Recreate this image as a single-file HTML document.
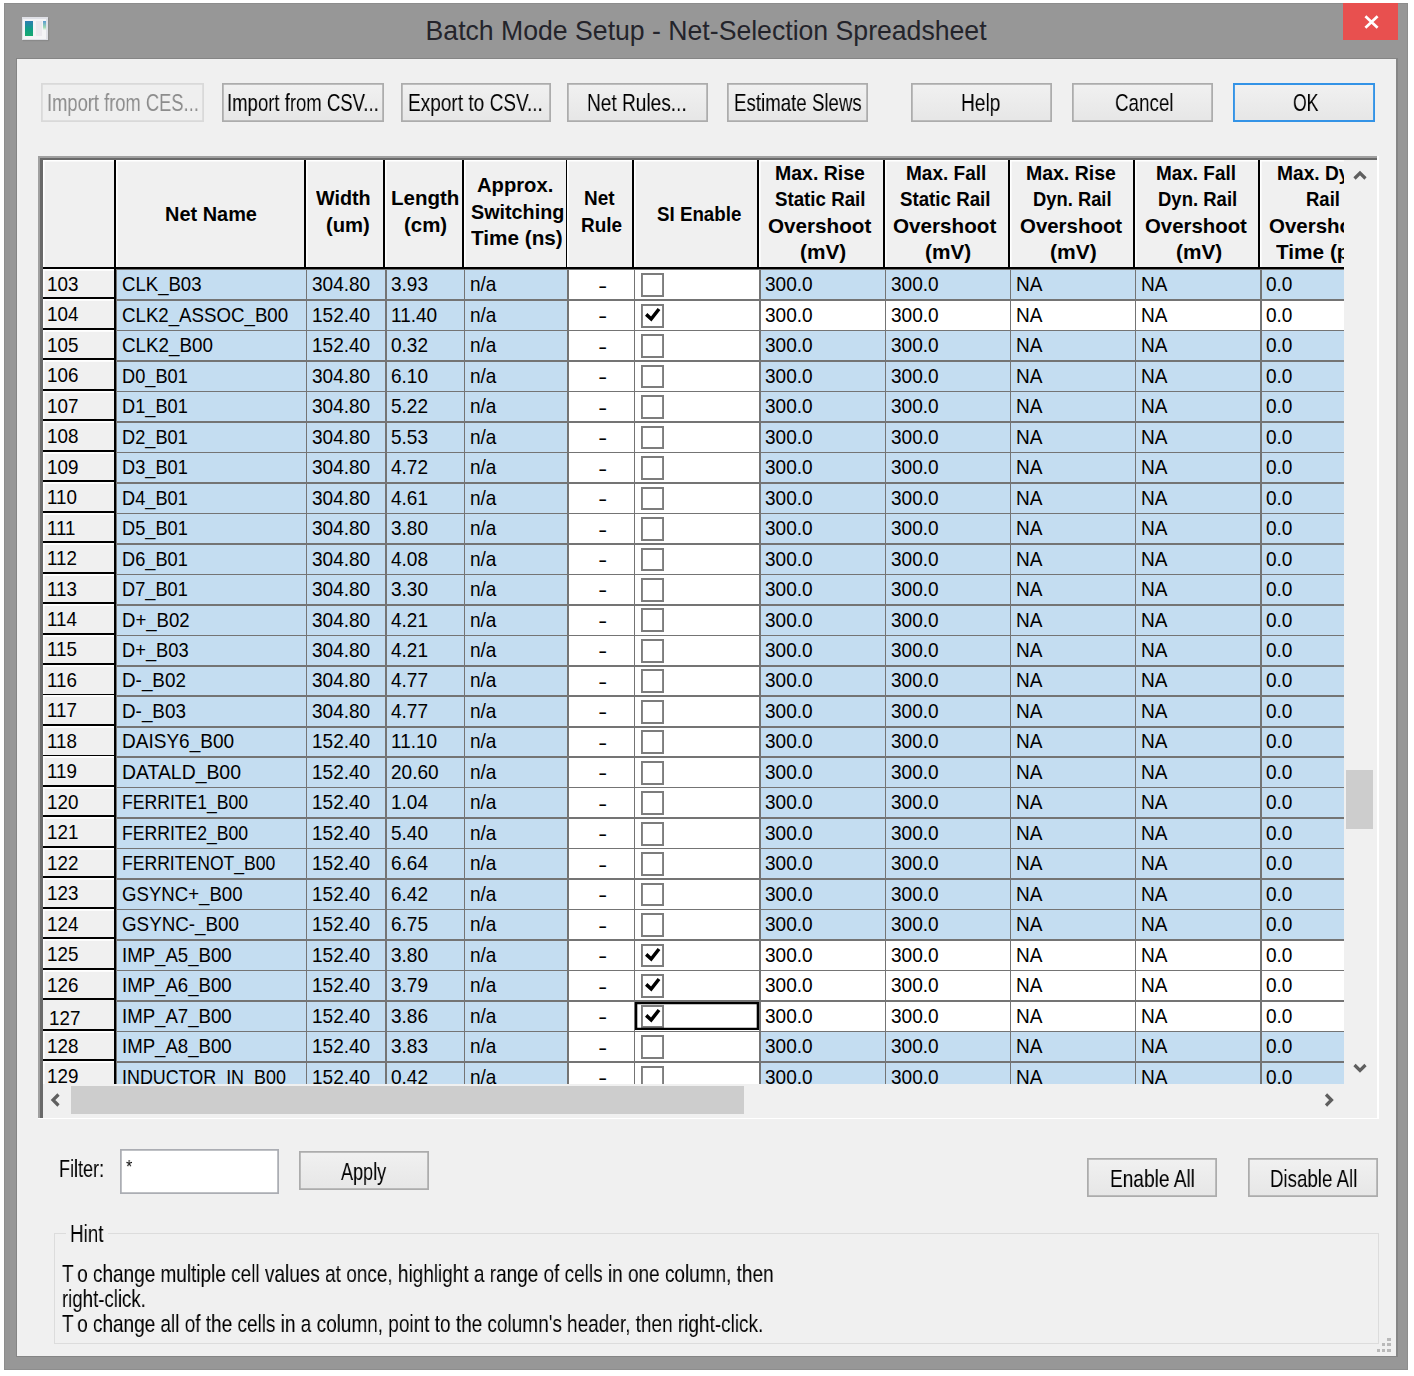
<!DOCTYPE html>
<html><head><meta charset="utf-8"><title>Batch Mode Setup - Net-Selection Spreadsheet</title>
<style>
html,body{margin:0;padding:0;background:#fff;}
body{width:1414px;height:1376px;position:relative;overflow:hidden;font-family:"Liberation Sans",sans-serif;color:#000;}
.a{position:absolute;}
.win{left:4px;top:3px;width:1403.8px;height:1367.3px;background:#979797;box-shadow:inset 0 0 0 1px #8d8d8d;}
.client{left:16px;top:58px;width:1381.5px;height:1299px;background:#858585;}
.client>i{position:absolute;left:1.2px;top:1.2px;right:1.2px;bottom:1.2px;background:#f0f0f0;}
.title{left:-1px;top:10.2px;width:1414px;text-align:center;font-size:28.3px;line-height:40px;color:#24242b;white-space:nowrap;}
.title span{display:inline-block;transform-origin:50% 50%;transform:scaleX(.941);}
.close{left:1342.5px;top:3px;width:55.5px;height:37px;background:#e8504f;}
.btn{box-sizing:border-box;box-shadow:inset 0 0 0 1.75px #acacac;background:linear-gradient(#f1f1f1,#e6e6e6);text-align:center;white-space:nowrap;}
.btn.dis{box-shadow:inset 0 0 0 1.75px #d9d9d9;background:#efefef;color:#8c8c8c;}
.btn.def{box-shadow:inset 0 0 0 1.9px #3393e6;}
.ms{position:absolute;will-change:transform;white-space:nowrap;font-size:24.4px;line-height:28px;transform-origin:0 0;}
.T{font-style:normal;margin-right:4.5px;}
.grid{background:#f0f0f0;overflow:hidden;}
.hc{position:absolute;background:#f0f0f0;font-weight:bold;text-align:center;display:flex;align-items:center;justify-content:center;white-space:nowrap;overflow:visible;}
.hc span{display:block;}
.hl{position:absolute;white-space:nowrap;font-weight:bold;font-size:20.2px;line-height:26.6px;transform-origin:0 0;}
.bl{position:absolute;background:#000;}
.gl{position:absolute;background:#747474;}
.wl{position:absolute;background:#fff;}
.c{position:absolute;white-space:nowrap;overflow:hidden;}
.cb{position:absolute;box-sizing:border-box;box-shadow:inset 0 0 0 1.9px #7c7c7c;background:#fff;}
</style></head><body>

<div class="a win"></div>
<div class="a client"><i></i></div>
<div class="a" style="left:22.0px;top:17.1px;width:25.9px;height:23.3px;background:#dfe0e6;box-shadow:1px 1px 1px #8a8a8a;"></div>
<div class="a" style="left:23.4px;top:19.4px;width:22.9px;height:19.2px;background:#f4f4f6;"></div>
<div class="a" style="left:24.8px;top:21.4px;width:8.6px;height:15px;background:linear-gradient(#2d7db2,#0f9f86 55%,#18a96e);"></div>
<div class="a" style="left:35.5px;top:21.4px;width:6px;height:15px;background:#ebe9ee;"></div>
<div class="a" style="left:42.6px;top:21.4px;width:3.3px;height:9px;background:linear-gradient(#5a9bd0,#9fd8b4 70%,#eef6ee);"></div>
<div class="a title"><span id="ttl">Batch Mode Setup - Net-Selection Spreadsheet</span></div>
<div class="a close"><svg class="a" style="left:21px;top:11.9px" width="15" height="14" viewBox="0 0 15 14"><path d="M1.4 1.2 L13.6 12.8 M13.6 1.2 L1.4 12.8" stroke="#fff" stroke-width="2.7" fill="none"/></svg></div>
<div class="a btn dis" style="left:41.4px;top:82.6px;width:162.4px;height:39.2px;"></div>
<div class="a btn " style="left:222.0px;top:82.6px;width:162.4px;height:39.2px;"></div>
<div class="a btn " style="left:400.8px;top:82.6px;width:150.0px;height:39.2px;"></div>
<div class="a btn " style="left:567.3px;top:82.6px;width:141.0px;height:39.2px;"></div>
<div class="a btn " style="left:726.7px;top:82.6px;width:141.2px;height:39.2px;"></div>
<div class="a btn " style="left:911.0px;top:82.6px;width:141.0px;height:39.2px;"></div>
<div class="a btn " style="left:1072.3px;top:82.6px;width:141.0px;height:39.2px;"></div>
<div class="a btn def" style="left:1233.2px;top:82.6px;width:141.6px;height:39.2px;"></div>
<div class="a" style="left:119.8px;top:1149px;width:158.8px;height:44.6px;box-sizing:border-box;box-shadow:inset 0 0 0 1.75px #abadb3;background:#fff;"></div>
<div class="a btn " style="left:298.7px;top:1151.0px;width:130.5px;height:38.6px;"></div>
<div class="a btn " style="left:1086.6px;top:1158.4px;width:130.3px;height:39.0px;"></div>
<div class="a btn " style="left:1248.0px;top:1158.4px;width:130.2px;height:39.0px;"></div>
<div class="a" style="left:53.6px;top:1233px;width:1325.6px;height:110.6px;box-sizing:border-box;border:1.5px solid #dcdcdc;"></div>
<div class="a" style="left:66px;top:1228px;width:42px;height:12px;background:#f0f0f0;"></div>
<div class="a" style="left:1387.3px;top:1337.5px;width:3.4px;height:3.4px;background:#b9b9b9;"></div>
<div class="a" style="left:1382.1px;top:1343.0px;width:3.4px;height:3.4px;background:#b9b9b9;"></div>
<div class="a" style="left:1387.3px;top:1343.0px;width:3.4px;height:3.4px;background:#b9b9b9;"></div>
<div class="a" style="left:1376.7px;top:1348.5px;width:3.4px;height:3.4px;background:#b9b9b9;"></div>
<div class="a" style="left:1382.1px;top:1348.5px;width:3.4px;height:3.4px;background:#b9b9b9;"></div>
<div class="a" style="left:1387.3px;top:1348.5px;width:3.4px;height:3.4px;background:#b9b9b9;"></div>
<span class="ms" id="tb0" style="left:46.50px;top:89.10px;color:#8c8c8c;transform:scaleX(0.7520);">Import from CES...</span>
<span class="ms" id="tb1" style="left:227.30px;top:89.10px;color:#000;transform:scaleX(0.7600);">Import from CSV...</span>
<span class="ms" id="tb2" style="left:407.50px;top:89.10px;color:#000;transform:scaleX(0.7812);">Export to CSV...</span>
<span class="ms" id="tb3" style="left:587.40px;top:89.10px;color:#000;transform:scaleX(0.7824);">Net Rules...</span>
<span class="ms" id="tb4" style="left:733.80px;top:89.10px;color:#000;transform:scaleX(0.7660);">Estimate Slews</span>
<span class="ms" id="tb5" style="left:961.40px;top:89.10px;color:#000;transform:scaleX(0.7849);">Help</span>
<span class="ms" id="tb6" style="left:1115.20px;top:89.10px;color:#000;transform:scaleX(0.7708);">Cancel</span>
<span class="ms" id="tb7" style="left:1292.70px;top:89.10px;color:#000;transform:scaleX(0.7208);">OK</span>
<span class="ms" id="filter" style="left:58.80px;top:1155.10px;color:#000;transform:scaleX(0.7394);">Filter:</span>
<span class="ms" id="star" style="left:126.10px;top:1153.10px;color:#000;font-size:19px;transform:scaleX(0.8500);">*</span>
<span class="ms" id="apply" style="left:340.70px;top:1158.10px;color:#000;transform:scaleX(0.7407);">Apply</span>
<span class="ms" id="enall" style="left:1110.30px;top:1164.70px;color:#000;transform:scaleX(0.7826);">Enable All</span>
<span class="ms" id="disall" style="left:1270.20px;top:1164.70px;color:#000;transform:scaleX(0.7672);">Disable All</span>
<span class="ms" id="hint" style="left:69.60px;top:1220.10px;color:#000;transform:scaleX(0.7746);">Hint</span>
<span class="ms" id="h1" style="left:61.80px;top:1259.90px;color:#000;transform:scaleX(0.7783);"><i class=T>T</i>o change multiple cell values at once, highlight a range of cells in one column, then</span>
<span class="ms" id="h2" style="left:61.60px;top:1284.70px;color:#000;transform:scaleX(0.7638);">right-click.</span>
<span class="ms" id="h3" style="left:61.80px;top:1309.50px;color:#000;transform:scaleX(0.7781);"><i class=T>T</i>o change all of the cells in a column, point to the column's header, then right-click.</span>
<div class="a" style="left:37.8px;top:155.6px;width:1340.8px;height:963.8px;background:#fff;"></div>
<div class="a" style="left:37.8px;top:155.6px;width:1339.1px;height:962.1px;background:#a0a0a0;"></div>
<div class="a" style="left:40.2px;top:157.9px;width:1336.7px;height:959.8px;background:#696969;"></div>
<div class="a" style="left:42.6px;top:160.1px;width:1334.3px;height:957.6px;background:#f0f0f0;"></div>
<div class="a" style="left:1346.2px;top:769.8px;width:26.9px;height:59px;background:#cdcdcd;"></div>
<div class="a" style="left:71px;top:1086.2px;width:673.2px;height:28.2px;background:#cdcdcd;"></div>
<svg class="a" style="left:1352.7px;top:169.2px" width="14" height="14" viewBox="0 0 14 14"><path d="M1.5 9.5 L7 4 L12.5 9.5" stroke="#5f5f5f" stroke-width="3.2" fill="none"/></svg>
<svg class="a" style="left:1352.7px;top:1061.2px" width="14" height="14" viewBox="0 0 14 14"><path d="M1.5 4 L7 9.5 L12.5 4" stroke="#5f5f5f" stroke-width="3.2" fill="none"/></svg>
<svg class="a" style="left:48.8px;top:1093.2px" width="14" height="14" viewBox="0 0 14 14"><path d="M9.5 1.5 L4 7 L9.5 12.5" stroke="#5f5f5f" stroke-width="3.2" fill="none"/></svg>
<svg class="a" style="left:1322.2px;top:1093.2px" width="14" height="14" viewBox="0 0 14 14"><path d="M4 1.5 L9.5 7 L4 12.5" stroke="#5f5f5f" stroke-width="3.2" fill="none"/></svg>
<div class="a grid" style="left:42.7px;top:160.1px;width:1301.3px;height:923.9px;">
<div class="hc" style="left:0.0px;top:0;width:71.5px;height:106.9px;font-size:20.2px;line-height:26.6px;box-shadow:inset 1.6px 1.6px 0 #fff;"></div>
<div class="bl" style="left:71.5px;top:0;width:1.7px;height:108.6px;"></div>
<div class="hc" style="left:73.2px;top:0;width:188.3px;height:106.9px;font-size:20.2px;line-height:26.6px;box-shadow:inset 1.6px 1.6px 0 #fff;"></div>
<div class="bl" style="left:261.5px;top:0;width:1.7px;height:108.6px;"></div>
<div class="hc" style="left:263.2px;top:0;width:77.6px;height:106.9px;font-size:20.2px;line-height:26.6px;box-shadow:inset 1.6px 1.6px 0 #fff;"></div>
<div class="bl" style="left:340.8px;top:0;width:1.7px;height:108.6px;"></div>
<div class="hc" style="left:342.5px;top:0;width:77.0px;height:106.9px;font-size:20.2px;line-height:26.6px;box-shadow:inset 1.6px 1.6px 0 #fff;"></div>
<div class="bl" style="left:419.5px;top:0;width:1.7px;height:108.6px;"></div>
<div class="hc" style="left:421.2px;top:0;width:101.9px;height:106.9px;font-size:20.2px;line-height:26.6px;box-shadow:inset 1.6px 1.6px 0 #fff;"></div>
<div class="bl" style="left:523.1px;top:0;width:1.7px;height:108.6px;"></div>
<div class="hc" style="left:524.8px;top:0;width:64.5px;height:106.9px;font-size:20.2px;line-height:26.6px;box-shadow:inset 1.6px 1.6px 0 #fff;"></div>
<div class="bl" style="left:589.3px;top:0;width:1.7px;height:108.6px;"></div>
<div class="hc" style="left:591.0px;top:0;width:123.7px;height:106.9px;font-size:20.2px;line-height:26.6px;box-shadow:inset 1.6px 1.6px 0 #fff;"></div>
<div class="bl" style="left:714.7px;top:0;width:1.7px;height:108.6px;"></div>
<div class="hc" style="left:716.4px;top:0;width:124.1px;height:106.9px;font-size:20.2px;line-height:26.6px;box-shadow:inset 1.6px 1.6px 0 #fff;"></div>
<div class="bl" style="left:840.5px;top:0;width:1.7px;height:108.6px;"></div>
<div class="hc" style="left:842.2px;top:0;width:123.3px;height:106.9px;font-size:20.2px;line-height:26.6px;box-shadow:inset 1.6px 1.6px 0 #fff;"></div>
<div class="bl" style="left:965.5px;top:0;width:1.7px;height:108.6px;"></div>
<div class="hc" style="left:967.2px;top:0;width:123.3px;height:106.9px;font-size:20.2px;line-height:26.6px;box-shadow:inset 1.6px 1.6px 0 #fff;"></div>
<div class="bl" style="left:1090.5px;top:0;width:1.7px;height:108.6px;"></div>
<div class="hc" style="left:1092.2px;top:0;width:123.5px;height:106.9px;font-size:20.2px;line-height:26.6px;box-shadow:inset 1.6px 1.6px 0 #fff;"></div>
<div class="bl" style="left:1215.7px;top:0;width:1.7px;height:108.6px;"></div>
<div class="hc" style="left:1217.4px;top:0;width:123.5px;height:106.9px;font-size:20.2px;line-height:26.6px;box-shadow:inset 1.6px 1.6px 0 #fff;"></div>
<div class="bl" style="left:1340.9px;top:0;width:1.7px;height:108.6px;"></div>
<div class="bl" style="left:0;top:106.9px;width:1400px;height:1.9px;"></div>
<span class="hl" id="hNetName" style="left:122.50px;top:40.60px;transform:scaleX(0.9875);">Net Name</span>
<span class="hl" id="hWidth" style="left:273.70px;top:25.20px;transform:scaleX(0.9787);">Width</span>
<span class="hl" id="hum" style="left:283.30px;top:51.80px;transform:scaleX(1.0025);">(um)</span>
<span class="hl" id="hLength" style="left:348.10px;top:25.20px;transform:scaleX(1.0152);">Length</span>
<span class="hl" id="hcm" style="left:361.10px;top:51.80px;transform:scaleX(1.0120);">(cm)</span>
<span class="hl" id="hApprox" style="left:434.30px;top:12.10px;transform:scaleX(1.0000);">Approx.</span>
<span class="hl" id="hSwitching" style="left:428.30px;top:38.60px;transform:scaleX(0.9789);">Switching</span>
<span class="hl" id="hTimens" style="left:428.30px;top:65.10px;transform:scaleX(1.0270);">Time (ns)</span>
<span class="hl" id="hNet" style="left:541.50px;top:25.20px;transform:scaleX(0.9385);">Net</span>
<span class="hl" id="hRule" style="left:538.10px;top:51.80px;transform:scaleX(0.9396);">Rule</span>
<span class="hl" id="hSI" style="left:614.30px;top:40.60px;transform:scaleX(0.9279);">SI Enable</span>
<span class="hl" id="h7a" style="left:732.30px;top:-0.10px;transform:scaleX(0.9645);">Max. Rise</span>
<span class="hl" id="h7b" style="left:732.30px;top:26.40px;transform:scaleX(0.9268);">Static Rail</span>
<span class="hl" id="h7c" style="left:725.50px;top:52.90px;transform:scaleX(1.0229);">Overshoot</span>
<span class="hl" id="h7d" style="left:757.30px;top:79.40px;transform:scaleX(1.0299);">(mV)</span>
<span class="hl" id="h8a" style="left:862.90px;top:-0.10px;transform:scaleX(0.9417);">Max. Fall</span>
<span class="hl" id="h8b" style="left:857.50px;top:26.40px;transform:scaleX(0.9268);">Static Rail</span>
<span class="hl" id="h8c" style="left:850.70px;top:52.90px;transform:scaleX(1.0229);">Overshoot</span>
<span class="hl" id="h8d" style="left:882.50px;top:79.40px;transform:scaleX(1.0299);">(mV)</span>
<span class="hl" id="h9a" style="left:983.10px;top:-0.10px;transform:scaleX(0.9643);">Max. Rise</span>
<span class="hl" id="h9b" style="left:990.10px;top:26.40px;transform:scaleX(0.9095);">Dyn. Rail</span>
<span class="hl" id="h9c" style="left:977.30px;top:52.90px;transform:scaleX(1.0119);">Overshoot</span>
<span class="hl" id="h9d" style="left:1007.70px;top:79.40px;transform:scaleX(1.0434);">(mV)</span>
<span class="hl" id="h10a" style="left:1113.70px;top:-0.10px;transform:scaleX(0.9377);">Max. Fall</span>
<span class="hl" id="h10b" style="left:1115.10px;top:26.40px;transform:scaleX(0.9165);">Dyn. Rail</span>
<span class="hl" id="h10c" style="left:1102.50px;top:52.90px;transform:scaleX(1.0089);">Overshoot</span>
<span class="hl" id="h10d" style="left:1133.30px;top:79.40px;transform:scaleX(1.0299);">(mV)</span>
<span class="hl" id="h11a" style="left:1234.50px;top:-0.10px;transform:scaleX(0.9500);">Max. Dyn.</span>
<span class="hl" id="h11b" style="left:1262.90px;top:26.40px;transform:scaleX(0.9163);">Rail</span>
<span class="hl" id="h11c" style="left:1226.60px;top:52.90px;transform:scaleX(1.0149);">Overshoot</span>
<span class="hl" id="h11d" style="left:1233.20px;top:79.40px;transform:scaleX(1.0300);">Time (ps)</span>
<div class="c" style="left:0;top:108.80px;width:71.5px;height:28.57px;background:#f0f0f0;box-shadow:inset 1.6px 1.8px 0 #fff;font-size:19.8px;line-height:30.47px;"><span id="n103" style="position:absolute;left:4.3px;top:-0.1px;transform:scaleX(.95);transform-origin:0 0;">103</span></div>
<div class="bl" style="left:0;top:137.37px;width:73.2px;height:1.9px;"></div>
<div class="c" style="left:73.2px;top:108.80px;width:190.0px;height:30.47px;background:#c4ddf1;font-size:19.8px;line-height:30.47px;">
<span id=t103_1 style="position:absolute;left:6.0px;top:0.45px;transform:scaleX(0.9392);transform-origin:0 0;">CLK_B03</span>
</div>
<div class="c" style="left:263.2px;top:108.80px;width:79.3px;height:30.47px;background:#c4ddf1;font-size:19.8px;line-height:30.47px;">
<span id=t103_2 style="position:absolute;left:6.0px;top:0.45px;transform:scaleX(0.962);transform-origin:0 0;">304.80</span>
</div>
<div class="c" style="left:342.5px;top:108.80px;width:78.7px;height:30.47px;background:#c4ddf1;font-size:19.8px;line-height:30.47px;">
<span id=t103_3 style="position:absolute;left:6.0px;top:0.45px;transform:scaleX(0.962);transform-origin:0 0;">3.93</span>
</div>
<div class="c" style="left:421.2px;top:108.80px;width:103.6px;height:30.47px;background:#c4ddf1;font-size:19.8px;line-height:30.47px;">
<span id=t103_4 style="position:absolute;left:6.0px;top:0.45px;transform:scaleX(0.962);transform-origin:0 0;">n/a</span>
</div>
<div class="c" style="left:524.8px;top:108.80px;width:66.2px;height:30.47px;background:#fff;font-size:19.8px;line-height:30.47px;">
<span style="position:absolute;left:0;right:0;top:1.9px;text-align:center;padding-left:4px;transform:scaleX(1.35);">-</span>
</div>
<div class="c" style="left:591.0px;top:108.80px;width:125.4px;height:30.47px;background:#fff;font-size:19.8px;line-height:30.47px;">
<div class="cb" style="left:7.6px;top:4.4px;width:22.6px;height:23.8px;"></div>
</div>
<div class="c" style="left:716.4px;top:108.80px;width:125.8px;height:30.47px;background:#c4ddf1;font-size:19.8px;line-height:30.47px;">
<span id=t103_7 style="position:absolute;left:6.0px;top:0.45px;transform:scaleX(0.962);transform-origin:0 0;">300.0</span>
</div>
<div class="c" style="left:842.2px;top:108.80px;width:125.0px;height:30.47px;background:#c4ddf1;font-size:19.8px;line-height:30.47px;">
<span id=t103_8 style="position:absolute;left:6.0px;top:0.45px;transform:scaleX(0.962);transform-origin:0 0;">300.0</span>
</div>
<div class="c" style="left:967.2px;top:108.80px;width:125.0px;height:30.47px;background:#c4ddf1;font-size:19.8px;line-height:30.47px;">
<span id=t103_9 style="position:absolute;left:6.0px;top:0.45px;transform:scaleX(0.962);transform-origin:0 0;">NA</span>
</div>
<div class="c" style="left:1092.2px;top:108.80px;width:125.2px;height:30.47px;background:#c4ddf1;font-size:19.8px;line-height:30.47px;">
<span id=t103_10 style="position:absolute;left:6.0px;top:0.45px;transform:scaleX(0.962);transform-origin:0 0;">NA</span>
</div>
<div class="c" style="left:1217.4px;top:108.80px;width:125.2px;height:30.47px;background:#c4ddf1;font-size:19.8px;line-height:30.47px;">
<span id=t103_11 style="position:absolute;left:6.0px;top:0.45px;transform:scaleX(0.962);transform-origin:0 0;">0.0</span>
</div>
<div class="c" style="left:0;top:139.27px;width:71.5px;height:28.57px;background:#f0f0f0;box-shadow:inset 1.6px 1.8px 0 #fff;font-size:19.8px;line-height:30.47px;"><span id="n104" style="position:absolute;left:4.3px;top:-0.1px;transform:scaleX(.95);transform-origin:0 0;">104</span></div>
<div class="bl" style="left:0;top:167.84px;width:73.2px;height:1.9px;"></div>
<div class="c" style="left:73.2px;top:139.27px;width:190.0px;height:30.47px;background:#c4ddf1;font-size:19.8px;line-height:30.47px;">
<span id=t104_1 style="position:absolute;left:6.0px;top:0.45px;transform:scaleX(0.9442);transform-origin:0 0;">CLK2_ASSOC_B00</span>
</div>
<div class="c" style="left:263.2px;top:139.27px;width:79.3px;height:30.47px;background:#c4ddf1;font-size:19.8px;line-height:30.47px;">
<span id=t104_2 style="position:absolute;left:6.0px;top:0.45px;transform:scaleX(0.962);transform-origin:0 0;">152.40</span>
</div>
<div class="c" style="left:342.5px;top:139.27px;width:78.7px;height:30.47px;background:#c4ddf1;font-size:19.8px;line-height:30.47px;">
<span id=t104_3 style="position:absolute;left:6.0px;top:0.45px;transform:scaleX(0.962);transform-origin:0 0;">11.40</span>
</div>
<div class="c" style="left:421.2px;top:139.27px;width:103.6px;height:30.47px;background:#c4ddf1;font-size:19.8px;line-height:30.47px;">
<span id=t104_4 style="position:absolute;left:6.0px;top:0.45px;transform:scaleX(0.962);transform-origin:0 0;">n/a</span>
</div>
<div class="c" style="left:524.8px;top:139.27px;width:66.2px;height:30.47px;background:#fff;font-size:19.8px;line-height:30.47px;">
<span style="position:absolute;left:0;right:0;top:1.9px;text-align:center;padding-left:4px;transform:scaleX(1.35);">-</span>
</div>
<div class="c" style="left:591.0px;top:139.27px;width:125.4px;height:30.47px;background:#fff;font-size:19.8px;line-height:30.47px;">
<div class="cb" style="left:7.6px;top:4.4px;width:22.6px;height:23.8px;"></div>
<svg style="position:absolute;left:10.6px;top:7.5px" width="18" height="17" viewBox="0 0 18 17"><path d="M2.2 7.4 L7.2 12 L15 2" stroke="#000" stroke-width="3.5" fill="none"/></svg>
</div>
<div class="c" style="left:716.4px;top:139.27px;width:125.8px;height:30.47px;background:#fff;font-size:19.8px;line-height:30.47px;">
<span id=t104_7 style="position:absolute;left:6.0px;top:0.45px;transform:scaleX(0.962);transform-origin:0 0;">300.0</span>
</div>
<div class="c" style="left:842.2px;top:139.27px;width:125.0px;height:30.47px;background:#fff;font-size:19.8px;line-height:30.47px;">
<span id=t104_8 style="position:absolute;left:6.0px;top:0.45px;transform:scaleX(0.962);transform-origin:0 0;">300.0</span>
</div>
<div class="c" style="left:967.2px;top:139.27px;width:125.0px;height:30.47px;background:#fff;font-size:19.8px;line-height:30.47px;">
<span id=t104_9 style="position:absolute;left:6.0px;top:0.45px;transform:scaleX(0.962);transform-origin:0 0;">NA</span>
</div>
<div class="c" style="left:1092.2px;top:139.27px;width:125.2px;height:30.47px;background:#fff;font-size:19.8px;line-height:30.47px;">
<span id=t104_10 style="position:absolute;left:6.0px;top:0.45px;transform:scaleX(0.962);transform-origin:0 0;">NA</span>
</div>
<div class="c" style="left:1217.4px;top:139.27px;width:125.2px;height:30.47px;background:#fff;font-size:19.8px;line-height:30.47px;">
<span id=t104_11 style="position:absolute;left:6.0px;top:0.45px;transform:scaleX(0.962);transform-origin:0 0;">0.0</span>
</div>
<div class="c" style="left:0;top:169.74px;width:71.5px;height:28.57px;background:#f0f0f0;box-shadow:inset 1.6px 1.8px 0 #fff;font-size:19.8px;line-height:30.47px;"><span id="n105" style="position:absolute;left:4.3px;top:-0.1px;transform:scaleX(.95);transform-origin:0 0;">105</span></div>
<div class="bl" style="left:0;top:198.31px;width:73.2px;height:1.9px;"></div>
<div class="c" style="left:73.2px;top:169.74px;width:190.0px;height:30.47px;background:#c4ddf1;font-size:19.8px;line-height:30.47px;">
<span  style="position:absolute;left:6.0px;top:0.45px;transform:scaleX(0.9492);transform-origin:0 0;">CLK2_B00</span>
</div>
<div class="c" style="left:263.2px;top:169.74px;width:79.3px;height:30.47px;background:#c4ddf1;font-size:19.8px;line-height:30.47px;">
<span  style="position:absolute;left:6.0px;top:0.45px;transform:scaleX(0.962);transform-origin:0 0;">152.40</span>
</div>
<div class="c" style="left:342.5px;top:169.74px;width:78.7px;height:30.47px;background:#c4ddf1;font-size:19.8px;line-height:30.47px;">
<span  style="position:absolute;left:6.0px;top:0.45px;transform:scaleX(0.962);transform-origin:0 0;">0.32</span>
</div>
<div class="c" style="left:421.2px;top:169.74px;width:103.6px;height:30.47px;background:#c4ddf1;font-size:19.8px;line-height:30.47px;">
<span  style="position:absolute;left:6.0px;top:0.45px;transform:scaleX(0.962);transform-origin:0 0;">n/a</span>
</div>
<div class="c" style="left:524.8px;top:169.74px;width:66.2px;height:30.47px;background:#fff;font-size:19.8px;line-height:30.47px;">
<span style="position:absolute;left:0;right:0;top:1.9px;text-align:center;padding-left:4px;transform:scaleX(1.35);">-</span>
</div>
<div class="c" style="left:591.0px;top:169.74px;width:125.4px;height:30.47px;background:#fff;font-size:19.8px;line-height:30.47px;">
<div class="cb" style="left:7.6px;top:4.4px;width:22.6px;height:23.8px;"></div>
</div>
<div class="c" style="left:716.4px;top:169.74px;width:125.8px;height:30.47px;background:#c4ddf1;font-size:19.8px;line-height:30.47px;">
<span  style="position:absolute;left:6.0px;top:0.45px;transform:scaleX(0.962);transform-origin:0 0;">300.0</span>
</div>
<div class="c" style="left:842.2px;top:169.74px;width:125.0px;height:30.47px;background:#c4ddf1;font-size:19.8px;line-height:30.47px;">
<span  style="position:absolute;left:6.0px;top:0.45px;transform:scaleX(0.962);transform-origin:0 0;">300.0</span>
</div>
<div class="c" style="left:967.2px;top:169.74px;width:125.0px;height:30.47px;background:#c4ddf1;font-size:19.8px;line-height:30.47px;">
<span  style="position:absolute;left:6.0px;top:0.45px;transform:scaleX(0.962);transform-origin:0 0;">NA</span>
</div>
<div class="c" style="left:1092.2px;top:169.74px;width:125.2px;height:30.47px;background:#c4ddf1;font-size:19.8px;line-height:30.47px;">
<span  style="position:absolute;left:6.0px;top:0.45px;transform:scaleX(0.962);transform-origin:0 0;">NA</span>
</div>
<div class="c" style="left:1217.4px;top:169.74px;width:125.2px;height:30.47px;background:#c4ddf1;font-size:19.8px;line-height:30.47px;">
<span  style="position:absolute;left:6.0px;top:0.45px;transform:scaleX(0.962);transform-origin:0 0;">0.0</span>
</div>
<div class="c" style="left:0;top:200.21px;width:71.5px;height:28.57px;background:#f0f0f0;box-shadow:inset 1.6px 1.8px 0 #fff;font-size:19.8px;line-height:30.47px;"><span id="n106" style="position:absolute;left:4.3px;top:-0.1px;transform:scaleX(.95);transform-origin:0 0;">106</span></div>
<div class="bl" style="left:0;top:228.78px;width:73.2px;height:1.9px;"></div>
<div class="c" style="left:73.2px;top:200.21px;width:190.0px;height:30.47px;background:#c4ddf1;font-size:19.8px;line-height:30.47px;">
<span  style="position:absolute;left:6.0px;top:0.45px;transform:scaleX(0.9204);transform-origin:0 0;">D0_B01</span>
</div>
<div class="c" style="left:263.2px;top:200.21px;width:79.3px;height:30.47px;background:#c4ddf1;font-size:19.8px;line-height:30.47px;">
<span  style="position:absolute;left:6.0px;top:0.45px;transform:scaleX(0.962);transform-origin:0 0;">304.80</span>
</div>
<div class="c" style="left:342.5px;top:200.21px;width:78.7px;height:30.47px;background:#c4ddf1;font-size:19.8px;line-height:30.47px;">
<span  style="position:absolute;left:6.0px;top:0.45px;transform:scaleX(0.962);transform-origin:0 0;">6.10</span>
</div>
<div class="c" style="left:421.2px;top:200.21px;width:103.6px;height:30.47px;background:#c4ddf1;font-size:19.8px;line-height:30.47px;">
<span  style="position:absolute;left:6.0px;top:0.45px;transform:scaleX(0.962);transform-origin:0 0;">n/a</span>
</div>
<div class="c" style="left:524.8px;top:200.21px;width:66.2px;height:30.47px;background:#fff;font-size:19.8px;line-height:30.47px;">
<span style="position:absolute;left:0;right:0;top:1.9px;text-align:center;padding-left:4px;transform:scaleX(1.35);">-</span>
</div>
<div class="c" style="left:591.0px;top:200.21px;width:125.4px;height:30.47px;background:#fff;font-size:19.8px;line-height:30.47px;">
<div class="cb" style="left:7.6px;top:4.4px;width:22.6px;height:23.8px;"></div>
</div>
<div class="c" style="left:716.4px;top:200.21px;width:125.8px;height:30.47px;background:#c4ddf1;font-size:19.8px;line-height:30.47px;">
<span  style="position:absolute;left:6.0px;top:0.45px;transform:scaleX(0.962);transform-origin:0 0;">300.0</span>
</div>
<div class="c" style="left:842.2px;top:200.21px;width:125.0px;height:30.47px;background:#c4ddf1;font-size:19.8px;line-height:30.47px;">
<span  style="position:absolute;left:6.0px;top:0.45px;transform:scaleX(0.962);transform-origin:0 0;">300.0</span>
</div>
<div class="c" style="left:967.2px;top:200.21px;width:125.0px;height:30.47px;background:#c4ddf1;font-size:19.8px;line-height:30.47px;">
<span  style="position:absolute;left:6.0px;top:0.45px;transform:scaleX(0.962);transform-origin:0 0;">NA</span>
</div>
<div class="c" style="left:1092.2px;top:200.21px;width:125.2px;height:30.47px;background:#c4ddf1;font-size:19.8px;line-height:30.47px;">
<span  style="position:absolute;left:6.0px;top:0.45px;transform:scaleX(0.962);transform-origin:0 0;">NA</span>
</div>
<div class="c" style="left:1217.4px;top:200.21px;width:125.2px;height:30.47px;background:#c4ddf1;font-size:19.8px;line-height:30.47px;">
<span  style="position:absolute;left:6.0px;top:0.45px;transform:scaleX(0.962);transform-origin:0 0;">0.0</span>
</div>
<div class="c" style="left:0;top:230.68px;width:71.5px;height:28.57px;background:#f0f0f0;box-shadow:inset 1.6px 1.8px 0 #fff;font-size:19.8px;line-height:30.47px;"><span id="n107" style="position:absolute;left:4.3px;top:-0.1px;transform:scaleX(.95);transform-origin:0 0;">107</span></div>
<div class="bl" style="left:0;top:259.25px;width:73.2px;height:1.9px;"></div>
<div class="c" style="left:73.2px;top:230.68px;width:190.0px;height:30.47px;background:#c4ddf1;font-size:19.8px;line-height:30.47px;">
<span  style="position:absolute;left:6.0px;top:0.45px;transform:scaleX(0.9204);transform-origin:0 0;">D1_B01</span>
</div>
<div class="c" style="left:263.2px;top:230.68px;width:79.3px;height:30.47px;background:#c4ddf1;font-size:19.8px;line-height:30.47px;">
<span  style="position:absolute;left:6.0px;top:0.45px;transform:scaleX(0.962);transform-origin:0 0;">304.80</span>
</div>
<div class="c" style="left:342.5px;top:230.68px;width:78.7px;height:30.47px;background:#c4ddf1;font-size:19.8px;line-height:30.47px;">
<span  style="position:absolute;left:6.0px;top:0.45px;transform:scaleX(0.962);transform-origin:0 0;">5.22</span>
</div>
<div class="c" style="left:421.2px;top:230.68px;width:103.6px;height:30.47px;background:#c4ddf1;font-size:19.8px;line-height:30.47px;">
<span  style="position:absolute;left:6.0px;top:0.45px;transform:scaleX(0.962);transform-origin:0 0;">n/a</span>
</div>
<div class="c" style="left:524.8px;top:230.68px;width:66.2px;height:30.47px;background:#fff;font-size:19.8px;line-height:30.47px;">
<span style="position:absolute;left:0;right:0;top:1.9px;text-align:center;padding-left:4px;transform:scaleX(1.35);">-</span>
</div>
<div class="c" style="left:591.0px;top:230.68px;width:125.4px;height:30.47px;background:#fff;font-size:19.8px;line-height:30.47px;">
<div class="cb" style="left:7.6px;top:4.4px;width:22.6px;height:23.8px;"></div>
</div>
<div class="c" style="left:716.4px;top:230.68px;width:125.8px;height:30.47px;background:#c4ddf1;font-size:19.8px;line-height:30.47px;">
<span  style="position:absolute;left:6.0px;top:0.45px;transform:scaleX(0.962);transform-origin:0 0;">300.0</span>
</div>
<div class="c" style="left:842.2px;top:230.68px;width:125.0px;height:30.47px;background:#c4ddf1;font-size:19.8px;line-height:30.47px;">
<span  style="position:absolute;left:6.0px;top:0.45px;transform:scaleX(0.962);transform-origin:0 0;">300.0</span>
</div>
<div class="c" style="left:967.2px;top:230.68px;width:125.0px;height:30.47px;background:#c4ddf1;font-size:19.8px;line-height:30.47px;">
<span  style="position:absolute;left:6.0px;top:0.45px;transform:scaleX(0.962);transform-origin:0 0;">NA</span>
</div>
<div class="c" style="left:1092.2px;top:230.68px;width:125.2px;height:30.47px;background:#c4ddf1;font-size:19.8px;line-height:30.47px;">
<span  style="position:absolute;left:6.0px;top:0.45px;transform:scaleX(0.962);transform-origin:0 0;">NA</span>
</div>
<div class="c" style="left:1217.4px;top:230.68px;width:125.2px;height:30.47px;background:#c4ddf1;font-size:19.8px;line-height:30.47px;">
<span  style="position:absolute;left:6.0px;top:0.45px;transform:scaleX(0.962);transform-origin:0 0;">0.0</span>
</div>
<div class="c" style="left:0;top:261.15px;width:71.5px;height:28.57px;background:#f0f0f0;box-shadow:inset 1.6px 1.8px 0 #fff;font-size:19.8px;line-height:30.47px;"><span id="n108" style="position:absolute;left:4.3px;top:-0.1px;transform:scaleX(.95);transform-origin:0 0;">108</span></div>
<div class="bl" style="left:0;top:289.72px;width:73.2px;height:1.9px;"></div>
<div class="c" style="left:73.2px;top:261.15px;width:190.0px;height:30.47px;background:#c4ddf1;font-size:19.8px;line-height:30.47px;">
<span  style="position:absolute;left:6.0px;top:0.45px;transform:scaleX(0.9204);transform-origin:0 0;">D2_B01</span>
</div>
<div class="c" style="left:263.2px;top:261.15px;width:79.3px;height:30.47px;background:#c4ddf1;font-size:19.8px;line-height:30.47px;">
<span  style="position:absolute;left:6.0px;top:0.45px;transform:scaleX(0.962);transform-origin:0 0;">304.80</span>
</div>
<div class="c" style="left:342.5px;top:261.15px;width:78.7px;height:30.47px;background:#c4ddf1;font-size:19.8px;line-height:30.47px;">
<span  style="position:absolute;left:6.0px;top:0.45px;transform:scaleX(0.962);transform-origin:0 0;">5.53</span>
</div>
<div class="c" style="left:421.2px;top:261.15px;width:103.6px;height:30.47px;background:#c4ddf1;font-size:19.8px;line-height:30.47px;">
<span  style="position:absolute;left:6.0px;top:0.45px;transform:scaleX(0.962);transform-origin:0 0;">n/a</span>
</div>
<div class="c" style="left:524.8px;top:261.15px;width:66.2px;height:30.47px;background:#fff;font-size:19.8px;line-height:30.47px;">
<span style="position:absolute;left:0;right:0;top:1.9px;text-align:center;padding-left:4px;transform:scaleX(1.35);">-</span>
</div>
<div class="c" style="left:591.0px;top:261.15px;width:125.4px;height:30.47px;background:#fff;font-size:19.8px;line-height:30.47px;">
<div class="cb" style="left:7.6px;top:4.4px;width:22.6px;height:23.8px;"></div>
</div>
<div class="c" style="left:716.4px;top:261.15px;width:125.8px;height:30.47px;background:#c4ddf1;font-size:19.8px;line-height:30.47px;">
<span  style="position:absolute;left:6.0px;top:0.45px;transform:scaleX(0.962);transform-origin:0 0;">300.0</span>
</div>
<div class="c" style="left:842.2px;top:261.15px;width:125.0px;height:30.47px;background:#c4ddf1;font-size:19.8px;line-height:30.47px;">
<span  style="position:absolute;left:6.0px;top:0.45px;transform:scaleX(0.962);transform-origin:0 0;">300.0</span>
</div>
<div class="c" style="left:967.2px;top:261.15px;width:125.0px;height:30.47px;background:#c4ddf1;font-size:19.8px;line-height:30.47px;">
<span  style="position:absolute;left:6.0px;top:0.45px;transform:scaleX(0.962);transform-origin:0 0;">NA</span>
</div>
<div class="c" style="left:1092.2px;top:261.15px;width:125.2px;height:30.47px;background:#c4ddf1;font-size:19.8px;line-height:30.47px;">
<span  style="position:absolute;left:6.0px;top:0.45px;transform:scaleX(0.962);transform-origin:0 0;">NA</span>
</div>
<div class="c" style="left:1217.4px;top:261.15px;width:125.2px;height:30.47px;background:#c4ddf1;font-size:19.8px;line-height:30.47px;">
<span  style="position:absolute;left:6.0px;top:0.45px;transform:scaleX(0.962);transform-origin:0 0;">0.0</span>
</div>
<div class="c" style="left:0;top:291.62px;width:71.5px;height:28.57px;background:#f0f0f0;box-shadow:inset 1.6px 1.8px 0 #fff;font-size:19.8px;line-height:30.47px;"><span id="n109" style="position:absolute;left:4.3px;top:-0.1px;transform:scaleX(.95);transform-origin:0 0;">109</span></div>
<div class="bl" style="left:0;top:320.19px;width:73.2px;height:1.9px;"></div>
<div class="c" style="left:73.2px;top:291.62px;width:190.0px;height:30.47px;background:#c4ddf1;font-size:19.8px;line-height:30.47px;">
<span  style="position:absolute;left:6.0px;top:0.45px;transform:scaleX(0.9204);transform-origin:0 0;">D3_B01</span>
</div>
<div class="c" style="left:263.2px;top:291.62px;width:79.3px;height:30.47px;background:#c4ddf1;font-size:19.8px;line-height:30.47px;">
<span  style="position:absolute;left:6.0px;top:0.45px;transform:scaleX(0.962);transform-origin:0 0;">304.80</span>
</div>
<div class="c" style="left:342.5px;top:291.62px;width:78.7px;height:30.47px;background:#c4ddf1;font-size:19.8px;line-height:30.47px;">
<span  style="position:absolute;left:6.0px;top:0.45px;transform:scaleX(0.962);transform-origin:0 0;">4.72</span>
</div>
<div class="c" style="left:421.2px;top:291.62px;width:103.6px;height:30.47px;background:#c4ddf1;font-size:19.8px;line-height:30.47px;">
<span  style="position:absolute;left:6.0px;top:0.45px;transform:scaleX(0.962);transform-origin:0 0;">n/a</span>
</div>
<div class="c" style="left:524.8px;top:291.62px;width:66.2px;height:30.47px;background:#fff;font-size:19.8px;line-height:30.47px;">
<span style="position:absolute;left:0;right:0;top:1.9px;text-align:center;padding-left:4px;transform:scaleX(1.35);">-</span>
</div>
<div class="c" style="left:591.0px;top:291.62px;width:125.4px;height:30.47px;background:#fff;font-size:19.8px;line-height:30.47px;">
<div class="cb" style="left:7.6px;top:4.4px;width:22.6px;height:23.8px;"></div>
</div>
<div class="c" style="left:716.4px;top:291.62px;width:125.8px;height:30.47px;background:#c4ddf1;font-size:19.8px;line-height:30.47px;">
<span  style="position:absolute;left:6.0px;top:0.45px;transform:scaleX(0.962);transform-origin:0 0;">300.0</span>
</div>
<div class="c" style="left:842.2px;top:291.62px;width:125.0px;height:30.47px;background:#c4ddf1;font-size:19.8px;line-height:30.47px;">
<span  style="position:absolute;left:6.0px;top:0.45px;transform:scaleX(0.962);transform-origin:0 0;">300.0</span>
</div>
<div class="c" style="left:967.2px;top:291.62px;width:125.0px;height:30.47px;background:#c4ddf1;font-size:19.8px;line-height:30.47px;">
<span  style="position:absolute;left:6.0px;top:0.45px;transform:scaleX(0.962);transform-origin:0 0;">NA</span>
</div>
<div class="c" style="left:1092.2px;top:291.62px;width:125.2px;height:30.47px;background:#c4ddf1;font-size:19.8px;line-height:30.47px;">
<span  style="position:absolute;left:6.0px;top:0.45px;transform:scaleX(0.962);transform-origin:0 0;">NA</span>
</div>
<div class="c" style="left:1217.4px;top:291.62px;width:125.2px;height:30.47px;background:#c4ddf1;font-size:19.8px;line-height:30.47px;">
<span  style="position:absolute;left:6.0px;top:0.45px;transform:scaleX(0.962);transform-origin:0 0;">0.0</span>
</div>
<div class="c" style="left:0;top:322.09px;width:71.5px;height:28.57px;background:#f0f0f0;box-shadow:inset 1.6px 1.8px 0 #fff;font-size:19.8px;line-height:30.47px;"><span id="n110" style="position:absolute;left:4.3px;top:-0.1px;transform:scaleX(.95);transform-origin:0 0;">110</span></div>
<div class="bl" style="left:0;top:350.66px;width:73.2px;height:1.9px;"></div>
<div class="c" style="left:73.2px;top:322.09px;width:190.0px;height:30.47px;background:#c4ddf1;font-size:19.8px;line-height:30.47px;">
<span  style="position:absolute;left:6.0px;top:0.45px;transform:scaleX(0.9204);transform-origin:0 0;">D4_B01</span>
</div>
<div class="c" style="left:263.2px;top:322.09px;width:79.3px;height:30.47px;background:#c4ddf1;font-size:19.8px;line-height:30.47px;">
<span  style="position:absolute;left:6.0px;top:0.45px;transform:scaleX(0.962);transform-origin:0 0;">304.80</span>
</div>
<div class="c" style="left:342.5px;top:322.09px;width:78.7px;height:30.47px;background:#c4ddf1;font-size:19.8px;line-height:30.47px;">
<span  style="position:absolute;left:6.0px;top:0.45px;transform:scaleX(0.962);transform-origin:0 0;">4.61</span>
</div>
<div class="c" style="left:421.2px;top:322.09px;width:103.6px;height:30.47px;background:#c4ddf1;font-size:19.8px;line-height:30.47px;">
<span  style="position:absolute;left:6.0px;top:0.45px;transform:scaleX(0.962);transform-origin:0 0;">n/a</span>
</div>
<div class="c" style="left:524.8px;top:322.09px;width:66.2px;height:30.47px;background:#fff;font-size:19.8px;line-height:30.47px;">
<span style="position:absolute;left:0;right:0;top:1.9px;text-align:center;padding-left:4px;transform:scaleX(1.35);">-</span>
</div>
<div class="c" style="left:591.0px;top:322.09px;width:125.4px;height:30.47px;background:#fff;font-size:19.8px;line-height:30.47px;">
<div class="cb" style="left:7.6px;top:4.4px;width:22.6px;height:23.8px;"></div>
</div>
<div class="c" style="left:716.4px;top:322.09px;width:125.8px;height:30.47px;background:#c4ddf1;font-size:19.8px;line-height:30.47px;">
<span  style="position:absolute;left:6.0px;top:0.45px;transform:scaleX(0.962);transform-origin:0 0;">300.0</span>
</div>
<div class="c" style="left:842.2px;top:322.09px;width:125.0px;height:30.47px;background:#c4ddf1;font-size:19.8px;line-height:30.47px;">
<span  style="position:absolute;left:6.0px;top:0.45px;transform:scaleX(0.962);transform-origin:0 0;">300.0</span>
</div>
<div class="c" style="left:967.2px;top:322.09px;width:125.0px;height:30.47px;background:#c4ddf1;font-size:19.8px;line-height:30.47px;">
<span  style="position:absolute;left:6.0px;top:0.45px;transform:scaleX(0.962);transform-origin:0 0;">NA</span>
</div>
<div class="c" style="left:1092.2px;top:322.09px;width:125.2px;height:30.47px;background:#c4ddf1;font-size:19.8px;line-height:30.47px;">
<span  style="position:absolute;left:6.0px;top:0.45px;transform:scaleX(0.962);transform-origin:0 0;">NA</span>
</div>
<div class="c" style="left:1217.4px;top:322.09px;width:125.2px;height:30.47px;background:#c4ddf1;font-size:19.8px;line-height:30.47px;">
<span  style="position:absolute;left:6.0px;top:0.45px;transform:scaleX(0.962);transform-origin:0 0;">0.0</span>
</div>
<div class="c" style="left:0;top:352.56px;width:71.5px;height:28.57px;background:#f0f0f0;box-shadow:inset 1.6px 1.8px 0 #fff;font-size:19.8px;line-height:30.47px;"><span id="n111" style="position:absolute;left:4.3px;top:-0.1px;transform:scaleX(.95);transform-origin:0 0;">111</span></div>
<div class="bl" style="left:0;top:381.13px;width:73.2px;height:1.9px;"></div>
<div class="c" style="left:73.2px;top:352.56px;width:190.0px;height:30.47px;background:#c4ddf1;font-size:19.8px;line-height:30.47px;">
<span  style="position:absolute;left:6.0px;top:0.45px;transform:scaleX(0.9204);transform-origin:0 0;">D5_B01</span>
</div>
<div class="c" style="left:263.2px;top:352.56px;width:79.3px;height:30.47px;background:#c4ddf1;font-size:19.8px;line-height:30.47px;">
<span  style="position:absolute;left:6.0px;top:0.45px;transform:scaleX(0.962);transform-origin:0 0;">304.80</span>
</div>
<div class="c" style="left:342.5px;top:352.56px;width:78.7px;height:30.47px;background:#c4ddf1;font-size:19.8px;line-height:30.47px;">
<span  style="position:absolute;left:6.0px;top:0.45px;transform:scaleX(0.962);transform-origin:0 0;">3.80</span>
</div>
<div class="c" style="left:421.2px;top:352.56px;width:103.6px;height:30.47px;background:#c4ddf1;font-size:19.8px;line-height:30.47px;">
<span  style="position:absolute;left:6.0px;top:0.45px;transform:scaleX(0.962);transform-origin:0 0;">n/a</span>
</div>
<div class="c" style="left:524.8px;top:352.56px;width:66.2px;height:30.47px;background:#fff;font-size:19.8px;line-height:30.47px;">
<span style="position:absolute;left:0;right:0;top:1.9px;text-align:center;padding-left:4px;transform:scaleX(1.35);">-</span>
</div>
<div class="c" style="left:591.0px;top:352.56px;width:125.4px;height:30.47px;background:#fff;font-size:19.8px;line-height:30.47px;">
<div class="cb" style="left:7.6px;top:4.4px;width:22.6px;height:23.8px;"></div>
</div>
<div class="c" style="left:716.4px;top:352.56px;width:125.8px;height:30.47px;background:#c4ddf1;font-size:19.8px;line-height:30.47px;">
<span  style="position:absolute;left:6.0px;top:0.45px;transform:scaleX(0.962);transform-origin:0 0;">300.0</span>
</div>
<div class="c" style="left:842.2px;top:352.56px;width:125.0px;height:30.47px;background:#c4ddf1;font-size:19.8px;line-height:30.47px;">
<span  style="position:absolute;left:6.0px;top:0.45px;transform:scaleX(0.962);transform-origin:0 0;">300.0</span>
</div>
<div class="c" style="left:967.2px;top:352.56px;width:125.0px;height:30.47px;background:#c4ddf1;font-size:19.8px;line-height:30.47px;">
<span  style="position:absolute;left:6.0px;top:0.45px;transform:scaleX(0.962);transform-origin:0 0;">NA</span>
</div>
<div class="c" style="left:1092.2px;top:352.56px;width:125.2px;height:30.47px;background:#c4ddf1;font-size:19.8px;line-height:30.47px;">
<span  style="position:absolute;left:6.0px;top:0.45px;transform:scaleX(0.962);transform-origin:0 0;">NA</span>
</div>
<div class="c" style="left:1217.4px;top:352.56px;width:125.2px;height:30.47px;background:#c4ddf1;font-size:19.8px;line-height:30.47px;">
<span  style="position:absolute;left:6.0px;top:0.45px;transform:scaleX(0.962);transform-origin:0 0;">0.0</span>
</div>
<div class="c" style="left:0;top:383.03px;width:71.5px;height:28.57px;background:#f0f0f0;box-shadow:inset 1.6px 1.8px 0 #fff;font-size:19.8px;line-height:30.47px;"><span id="n112" style="position:absolute;left:4.3px;top:-0.1px;transform:scaleX(.95);transform-origin:0 0;">112</span></div>
<div class="bl" style="left:0;top:411.60px;width:73.2px;height:1.9px;"></div>
<div class="c" style="left:73.2px;top:383.03px;width:190.0px;height:30.47px;background:#c4ddf1;font-size:19.8px;line-height:30.47px;">
<span  style="position:absolute;left:6.0px;top:0.45px;transform:scaleX(0.9204);transform-origin:0 0;">D6_B01</span>
</div>
<div class="c" style="left:263.2px;top:383.03px;width:79.3px;height:30.47px;background:#c4ddf1;font-size:19.8px;line-height:30.47px;">
<span  style="position:absolute;left:6.0px;top:0.45px;transform:scaleX(0.962);transform-origin:0 0;">304.80</span>
</div>
<div class="c" style="left:342.5px;top:383.03px;width:78.7px;height:30.47px;background:#c4ddf1;font-size:19.8px;line-height:30.47px;">
<span  style="position:absolute;left:6.0px;top:0.45px;transform:scaleX(0.962);transform-origin:0 0;">4.08</span>
</div>
<div class="c" style="left:421.2px;top:383.03px;width:103.6px;height:30.47px;background:#c4ddf1;font-size:19.8px;line-height:30.47px;">
<span  style="position:absolute;left:6.0px;top:0.45px;transform:scaleX(0.962);transform-origin:0 0;">n/a</span>
</div>
<div class="c" style="left:524.8px;top:383.03px;width:66.2px;height:30.47px;background:#fff;font-size:19.8px;line-height:30.47px;">
<span style="position:absolute;left:0;right:0;top:1.9px;text-align:center;padding-left:4px;transform:scaleX(1.35);">-</span>
</div>
<div class="c" style="left:591.0px;top:383.03px;width:125.4px;height:30.47px;background:#fff;font-size:19.8px;line-height:30.47px;">
<div class="cb" style="left:7.6px;top:4.4px;width:22.6px;height:23.8px;"></div>
</div>
<div class="c" style="left:716.4px;top:383.03px;width:125.8px;height:30.47px;background:#c4ddf1;font-size:19.8px;line-height:30.47px;">
<span  style="position:absolute;left:6.0px;top:0.45px;transform:scaleX(0.962);transform-origin:0 0;">300.0</span>
</div>
<div class="c" style="left:842.2px;top:383.03px;width:125.0px;height:30.47px;background:#c4ddf1;font-size:19.8px;line-height:30.47px;">
<span  style="position:absolute;left:6.0px;top:0.45px;transform:scaleX(0.962);transform-origin:0 0;">300.0</span>
</div>
<div class="c" style="left:967.2px;top:383.03px;width:125.0px;height:30.47px;background:#c4ddf1;font-size:19.8px;line-height:30.47px;">
<span  style="position:absolute;left:6.0px;top:0.45px;transform:scaleX(0.962);transform-origin:0 0;">NA</span>
</div>
<div class="c" style="left:1092.2px;top:383.03px;width:125.2px;height:30.47px;background:#c4ddf1;font-size:19.8px;line-height:30.47px;">
<span  style="position:absolute;left:6.0px;top:0.45px;transform:scaleX(0.962);transform-origin:0 0;">NA</span>
</div>
<div class="c" style="left:1217.4px;top:383.03px;width:125.2px;height:30.47px;background:#c4ddf1;font-size:19.8px;line-height:30.47px;">
<span  style="position:absolute;left:6.0px;top:0.45px;transform:scaleX(0.962);transform-origin:0 0;">0.0</span>
</div>
<div class="c" style="left:0;top:413.50px;width:71.5px;height:28.57px;background:#f0f0f0;box-shadow:inset 1.6px 1.8px 0 #fff;font-size:19.8px;line-height:30.47px;"><span id="n113" style="position:absolute;left:4.3px;top:-0.1px;transform:scaleX(.95);transform-origin:0 0;">113</span></div>
<div class="bl" style="left:0;top:442.07px;width:73.2px;height:1.9px;"></div>
<div class="c" style="left:73.2px;top:413.50px;width:190.0px;height:30.47px;background:#c4ddf1;font-size:19.8px;line-height:30.47px;">
<span  style="position:absolute;left:6.0px;top:0.45px;transform:scaleX(0.9204);transform-origin:0 0;">D7_B01</span>
</div>
<div class="c" style="left:263.2px;top:413.50px;width:79.3px;height:30.47px;background:#c4ddf1;font-size:19.8px;line-height:30.47px;">
<span  style="position:absolute;left:6.0px;top:0.45px;transform:scaleX(0.962);transform-origin:0 0;">304.80</span>
</div>
<div class="c" style="left:342.5px;top:413.50px;width:78.7px;height:30.47px;background:#c4ddf1;font-size:19.8px;line-height:30.47px;">
<span  style="position:absolute;left:6.0px;top:0.45px;transform:scaleX(0.962);transform-origin:0 0;">3.30</span>
</div>
<div class="c" style="left:421.2px;top:413.50px;width:103.6px;height:30.47px;background:#c4ddf1;font-size:19.8px;line-height:30.47px;">
<span  style="position:absolute;left:6.0px;top:0.45px;transform:scaleX(0.962);transform-origin:0 0;">n/a</span>
</div>
<div class="c" style="left:524.8px;top:413.50px;width:66.2px;height:30.47px;background:#fff;font-size:19.8px;line-height:30.47px;">
<span style="position:absolute;left:0;right:0;top:1.9px;text-align:center;padding-left:4px;transform:scaleX(1.35);">-</span>
</div>
<div class="c" style="left:591.0px;top:413.50px;width:125.4px;height:30.47px;background:#fff;font-size:19.8px;line-height:30.47px;">
<div class="cb" style="left:7.6px;top:4.4px;width:22.6px;height:23.8px;"></div>
</div>
<div class="c" style="left:716.4px;top:413.50px;width:125.8px;height:30.47px;background:#c4ddf1;font-size:19.8px;line-height:30.47px;">
<span  style="position:absolute;left:6.0px;top:0.45px;transform:scaleX(0.962);transform-origin:0 0;">300.0</span>
</div>
<div class="c" style="left:842.2px;top:413.50px;width:125.0px;height:30.47px;background:#c4ddf1;font-size:19.8px;line-height:30.47px;">
<span  style="position:absolute;left:6.0px;top:0.45px;transform:scaleX(0.962);transform-origin:0 0;">300.0</span>
</div>
<div class="c" style="left:967.2px;top:413.50px;width:125.0px;height:30.47px;background:#c4ddf1;font-size:19.8px;line-height:30.47px;">
<span  style="position:absolute;left:6.0px;top:0.45px;transform:scaleX(0.962);transform-origin:0 0;">NA</span>
</div>
<div class="c" style="left:1092.2px;top:413.50px;width:125.2px;height:30.47px;background:#c4ddf1;font-size:19.8px;line-height:30.47px;">
<span  style="position:absolute;left:6.0px;top:0.45px;transform:scaleX(0.962);transform-origin:0 0;">NA</span>
</div>
<div class="c" style="left:1217.4px;top:413.50px;width:125.2px;height:30.47px;background:#c4ddf1;font-size:19.8px;line-height:30.47px;">
<span  style="position:absolute;left:6.0px;top:0.45px;transform:scaleX(0.962);transform-origin:0 0;">0.0</span>
</div>
<div class="c" style="left:0;top:443.97px;width:71.5px;height:28.57px;background:#f0f0f0;box-shadow:inset 1.6px 1.8px 0 #fff;font-size:19.8px;line-height:30.47px;"><span id="n114" style="position:absolute;left:4.3px;top:-0.1px;transform:scaleX(.95);transform-origin:0 0;">114</span></div>
<div class="bl" style="left:0;top:472.54px;width:73.2px;height:1.9px;"></div>
<div class="c" style="left:73.2px;top:443.97px;width:190.0px;height:30.47px;background:#c4ddf1;font-size:19.8px;line-height:30.47px;">
<span  style="position:absolute;left:6.0px;top:0.45px;transform:scaleX(0.939);transform-origin:0 0;">D+_B02</span>
</div>
<div class="c" style="left:263.2px;top:443.97px;width:79.3px;height:30.47px;background:#c4ddf1;font-size:19.8px;line-height:30.47px;">
<span  style="position:absolute;left:6.0px;top:0.45px;transform:scaleX(0.962);transform-origin:0 0;">304.80</span>
</div>
<div class="c" style="left:342.5px;top:443.97px;width:78.7px;height:30.47px;background:#c4ddf1;font-size:19.8px;line-height:30.47px;">
<span  style="position:absolute;left:6.0px;top:0.45px;transform:scaleX(0.962);transform-origin:0 0;">4.21</span>
</div>
<div class="c" style="left:421.2px;top:443.97px;width:103.6px;height:30.47px;background:#c4ddf1;font-size:19.8px;line-height:30.47px;">
<span  style="position:absolute;left:6.0px;top:0.45px;transform:scaleX(0.962);transform-origin:0 0;">n/a</span>
</div>
<div class="c" style="left:524.8px;top:443.97px;width:66.2px;height:30.47px;background:#fff;font-size:19.8px;line-height:30.47px;">
<span style="position:absolute;left:0;right:0;top:1.9px;text-align:center;padding-left:4px;transform:scaleX(1.35);">-</span>
</div>
<div class="c" style="left:591.0px;top:443.97px;width:125.4px;height:30.47px;background:#fff;font-size:19.8px;line-height:30.47px;">
<div class="cb" style="left:7.6px;top:4.4px;width:22.6px;height:23.8px;"></div>
</div>
<div class="c" style="left:716.4px;top:443.97px;width:125.8px;height:30.47px;background:#c4ddf1;font-size:19.8px;line-height:30.47px;">
<span  style="position:absolute;left:6.0px;top:0.45px;transform:scaleX(0.962);transform-origin:0 0;">300.0</span>
</div>
<div class="c" style="left:842.2px;top:443.97px;width:125.0px;height:30.47px;background:#c4ddf1;font-size:19.8px;line-height:30.47px;">
<span  style="position:absolute;left:6.0px;top:0.45px;transform:scaleX(0.962);transform-origin:0 0;">300.0</span>
</div>
<div class="c" style="left:967.2px;top:443.97px;width:125.0px;height:30.47px;background:#c4ddf1;font-size:19.8px;line-height:30.47px;">
<span  style="position:absolute;left:6.0px;top:0.45px;transform:scaleX(0.962);transform-origin:0 0;">NA</span>
</div>
<div class="c" style="left:1092.2px;top:443.97px;width:125.2px;height:30.47px;background:#c4ddf1;font-size:19.8px;line-height:30.47px;">
<span  style="position:absolute;left:6.0px;top:0.45px;transform:scaleX(0.962);transform-origin:0 0;">NA</span>
</div>
<div class="c" style="left:1217.4px;top:443.97px;width:125.2px;height:30.47px;background:#c4ddf1;font-size:19.8px;line-height:30.47px;">
<span  style="position:absolute;left:6.0px;top:0.45px;transform:scaleX(0.962);transform-origin:0 0;">0.0</span>
</div>
<div class="c" style="left:0;top:474.44px;width:71.5px;height:28.57px;background:#f0f0f0;box-shadow:inset 1.6px 1.8px 0 #fff;font-size:19.8px;line-height:30.47px;"><span id="n115" style="position:absolute;left:4.3px;top:-0.1px;transform:scaleX(.95);transform-origin:0 0;">115</span></div>
<div class="bl" style="left:0;top:503.01px;width:73.2px;height:1.9px;"></div>
<div class="c" style="left:73.2px;top:474.44px;width:190.0px;height:30.47px;background:#c4ddf1;font-size:19.8px;line-height:30.47px;">
<span  style="position:absolute;left:6.0px;top:0.45px;transform:scaleX(0.9252);transform-origin:0 0;">D+_B03</span>
</div>
<div class="c" style="left:263.2px;top:474.44px;width:79.3px;height:30.47px;background:#c4ddf1;font-size:19.8px;line-height:30.47px;">
<span  style="position:absolute;left:6.0px;top:0.45px;transform:scaleX(0.962);transform-origin:0 0;">304.80</span>
</div>
<div class="c" style="left:342.5px;top:474.44px;width:78.7px;height:30.47px;background:#c4ddf1;font-size:19.8px;line-height:30.47px;">
<span  style="position:absolute;left:6.0px;top:0.45px;transform:scaleX(0.962);transform-origin:0 0;">4.21</span>
</div>
<div class="c" style="left:421.2px;top:474.44px;width:103.6px;height:30.47px;background:#c4ddf1;font-size:19.8px;line-height:30.47px;">
<span  style="position:absolute;left:6.0px;top:0.45px;transform:scaleX(0.962);transform-origin:0 0;">n/a</span>
</div>
<div class="c" style="left:524.8px;top:474.44px;width:66.2px;height:30.47px;background:#fff;font-size:19.8px;line-height:30.47px;">
<span style="position:absolute;left:0;right:0;top:1.9px;text-align:center;padding-left:4px;transform:scaleX(1.35);">-</span>
</div>
<div class="c" style="left:591.0px;top:474.44px;width:125.4px;height:30.47px;background:#fff;font-size:19.8px;line-height:30.47px;">
<div class="cb" style="left:7.6px;top:4.4px;width:22.6px;height:23.8px;"></div>
</div>
<div class="c" style="left:716.4px;top:474.44px;width:125.8px;height:30.47px;background:#c4ddf1;font-size:19.8px;line-height:30.47px;">
<span  style="position:absolute;left:6.0px;top:0.45px;transform:scaleX(0.962);transform-origin:0 0;">300.0</span>
</div>
<div class="c" style="left:842.2px;top:474.44px;width:125.0px;height:30.47px;background:#c4ddf1;font-size:19.8px;line-height:30.47px;">
<span  style="position:absolute;left:6.0px;top:0.45px;transform:scaleX(0.962);transform-origin:0 0;">300.0</span>
</div>
<div class="c" style="left:967.2px;top:474.44px;width:125.0px;height:30.47px;background:#c4ddf1;font-size:19.8px;line-height:30.47px;">
<span  style="position:absolute;left:6.0px;top:0.45px;transform:scaleX(0.962);transform-origin:0 0;">NA</span>
</div>
<div class="c" style="left:1092.2px;top:474.44px;width:125.2px;height:30.47px;background:#c4ddf1;font-size:19.8px;line-height:30.47px;">
<span  style="position:absolute;left:6.0px;top:0.45px;transform:scaleX(0.962);transform-origin:0 0;">NA</span>
</div>
<div class="c" style="left:1217.4px;top:474.44px;width:125.2px;height:30.47px;background:#c4ddf1;font-size:19.8px;line-height:30.47px;">
<span  style="position:absolute;left:6.0px;top:0.45px;transform:scaleX(0.962);transform-origin:0 0;">0.0</span>
</div>
<div class="c" style="left:0;top:504.91px;width:71.5px;height:28.57px;background:#f0f0f0;box-shadow:inset 1.6px 1.8px 0 #fff;font-size:19.8px;line-height:30.47px;"><span id="n116" style="position:absolute;left:4.3px;top:-0.1px;transform:scaleX(.95);transform-origin:0 0;">116</span></div>
<div class="bl" style="left:0;top:533.48px;width:73.2px;height:1.9px;"></div>
<div class="c" style="left:73.2px;top:504.91px;width:190.0px;height:30.47px;background:#c4ddf1;font-size:19.8px;line-height:30.47px;">
<span  style="position:absolute;left:6.0px;top:0.45px;transform:scaleX(0.9528);transform-origin:0 0;">D-_B02</span>
</div>
<div class="c" style="left:263.2px;top:504.91px;width:79.3px;height:30.47px;background:#c4ddf1;font-size:19.8px;line-height:30.47px;">
<span  style="position:absolute;left:6.0px;top:0.45px;transform:scaleX(0.962);transform-origin:0 0;">304.80</span>
</div>
<div class="c" style="left:342.5px;top:504.91px;width:78.7px;height:30.47px;background:#c4ddf1;font-size:19.8px;line-height:30.47px;">
<span  style="position:absolute;left:6.0px;top:0.45px;transform:scaleX(0.962);transform-origin:0 0;">4.77</span>
</div>
<div class="c" style="left:421.2px;top:504.91px;width:103.6px;height:30.47px;background:#c4ddf1;font-size:19.8px;line-height:30.47px;">
<span  style="position:absolute;left:6.0px;top:0.45px;transform:scaleX(0.962);transform-origin:0 0;">n/a</span>
</div>
<div class="c" style="left:524.8px;top:504.91px;width:66.2px;height:30.47px;background:#fff;font-size:19.8px;line-height:30.47px;">
<span style="position:absolute;left:0;right:0;top:1.9px;text-align:center;padding-left:4px;transform:scaleX(1.35);">-</span>
</div>
<div class="c" style="left:591.0px;top:504.91px;width:125.4px;height:30.47px;background:#fff;font-size:19.8px;line-height:30.47px;">
<div class="cb" style="left:7.6px;top:4.4px;width:22.6px;height:23.8px;"></div>
</div>
<div class="c" style="left:716.4px;top:504.91px;width:125.8px;height:30.47px;background:#c4ddf1;font-size:19.8px;line-height:30.47px;">
<span  style="position:absolute;left:6.0px;top:0.45px;transform:scaleX(0.962);transform-origin:0 0;">300.0</span>
</div>
<div class="c" style="left:842.2px;top:504.91px;width:125.0px;height:30.47px;background:#c4ddf1;font-size:19.8px;line-height:30.47px;">
<span  style="position:absolute;left:6.0px;top:0.45px;transform:scaleX(0.962);transform-origin:0 0;">300.0</span>
</div>
<div class="c" style="left:967.2px;top:504.91px;width:125.0px;height:30.47px;background:#c4ddf1;font-size:19.8px;line-height:30.47px;">
<span  style="position:absolute;left:6.0px;top:0.45px;transform:scaleX(0.962);transform-origin:0 0;">NA</span>
</div>
<div class="c" style="left:1092.2px;top:504.91px;width:125.2px;height:30.47px;background:#c4ddf1;font-size:19.8px;line-height:30.47px;">
<span  style="position:absolute;left:6.0px;top:0.45px;transform:scaleX(0.962);transform-origin:0 0;">NA</span>
</div>
<div class="c" style="left:1217.4px;top:504.91px;width:125.2px;height:30.47px;background:#c4ddf1;font-size:19.8px;line-height:30.47px;">
<span  style="position:absolute;left:6.0px;top:0.45px;transform:scaleX(0.962);transform-origin:0 0;">0.0</span>
</div>
<div class="c" style="left:0;top:535.38px;width:71.5px;height:28.57px;background:#f0f0f0;box-shadow:inset 1.6px 1.8px 0 #fff;font-size:19.8px;line-height:30.47px;"><span id="n117" style="position:absolute;left:4.3px;top:-0.1px;transform:scaleX(.95);transform-origin:0 0;">117</span></div>
<div class="bl" style="left:0;top:563.95px;width:73.2px;height:1.9px;"></div>
<div class="c" style="left:73.2px;top:535.38px;width:190.0px;height:30.47px;background:#c4ddf1;font-size:19.8px;line-height:30.47px;">
<span  style="position:absolute;left:6.0px;top:0.45px;transform:scaleX(0.9528);transform-origin:0 0;">D-_B03</span>
</div>
<div class="c" style="left:263.2px;top:535.38px;width:79.3px;height:30.47px;background:#c4ddf1;font-size:19.8px;line-height:30.47px;">
<span  style="position:absolute;left:6.0px;top:0.45px;transform:scaleX(0.962);transform-origin:0 0;">304.80</span>
</div>
<div class="c" style="left:342.5px;top:535.38px;width:78.7px;height:30.47px;background:#c4ddf1;font-size:19.8px;line-height:30.47px;">
<span  style="position:absolute;left:6.0px;top:0.45px;transform:scaleX(0.962);transform-origin:0 0;">4.77</span>
</div>
<div class="c" style="left:421.2px;top:535.38px;width:103.6px;height:30.47px;background:#c4ddf1;font-size:19.8px;line-height:30.47px;">
<span  style="position:absolute;left:6.0px;top:0.45px;transform:scaleX(0.962);transform-origin:0 0;">n/a</span>
</div>
<div class="c" style="left:524.8px;top:535.38px;width:66.2px;height:30.47px;background:#fff;font-size:19.8px;line-height:30.47px;">
<span style="position:absolute;left:0;right:0;top:1.9px;text-align:center;padding-left:4px;transform:scaleX(1.35);">-</span>
</div>
<div class="c" style="left:591.0px;top:535.38px;width:125.4px;height:30.47px;background:#fff;font-size:19.8px;line-height:30.47px;">
<div class="cb" style="left:7.6px;top:4.4px;width:22.6px;height:23.8px;"></div>
</div>
<div class="c" style="left:716.4px;top:535.38px;width:125.8px;height:30.47px;background:#c4ddf1;font-size:19.8px;line-height:30.47px;">
<span  style="position:absolute;left:6.0px;top:0.45px;transform:scaleX(0.962);transform-origin:0 0;">300.0</span>
</div>
<div class="c" style="left:842.2px;top:535.38px;width:125.0px;height:30.47px;background:#c4ddf1;font-size:19.8px;line-height:30.47px;">
<span  style="position:absolute;left:6.0px;top:0.45px;transform:scaleX(0.962);transform-origin:0 0;">300.0</span>
</div>
<div class="c" style="left:967.2px;top:535.38px;width:125.0px;height:30.47px;background:#c4ddf1;font-size:19.8px;line-height:30.47px;">
<span  style="position:absolute;left:6.0px;top:0.45px;transform:scaleX(0.962);transform-origin:0 0;">NA</span>
</div>
<div class="c" style="left:1092.2px;top:535.38px;width:125.2px;height:30.47px;background:#c4ddf1;font-size:19.8px;line-height:30.47px;">
<span  style="position:absolute;left:6.0px;top:0.45px;transform:scaleX(0.962);transform-origin:0 0;">NA</span>
</div>
<div class="c" style="left:1217.4px;top:535.38px;width:125.2px;height:30.47px;background:#c4ddf1;font-size:19.8px;line-height:30.47px;">
<span  style="position:absolute;left:6.0px;top:0.45px;transform:scaleX(0.962);transform-origin:0 0;">0.0</span>
</div>
<div class="c" style="left:0;top:565.85px;width:71.5px;height:28.57px;background:#f0f0f0;box-shadow:inset 1.6px 1.8px 0 #fff;font-size:19.8px;line-height:30.47px;"><span id="n118" style="position:absolute;left:4.3px;top:-0.1px;transform:scaleX(.95);transform-origin:0 0;">118</span></div>
<div class="bl" style="left:0;top:594.42px;width:73.2px;height:1.9px;"></div>
<div class="c" style="left:73.2px;top:565.85px;width:190.0px;height:30.47px;background:#c4ddf1;font-size:19.8px;line-height:30.47px;">
<span  style="position:absolute;left:6.0px;top:0.45px;transform:scaleX(0.962);transform-origin:0 0;">DAISY6_B00</span>
</div>
<div class="c" style="left:263.2px;top:565.85px;width:79.3px;height:30.47px;background:#c4ddf1;font-size:19.8px;line-height:30.47px;">
<span  style="position:absolute;left:6.0px;top:0.45px;transform:scaleX(0.962);transform-origin:0 0;">152.40</span>
</div>
<div class="c" style="left:342.5px;top:565.85px;width:78.7px;height:30.47px;background:#c4ddf1;font-size:19.8px;line-height:30.47px;">
<span  style="position:absolute;left:6.0px;top:0.45px;transform:scaleX(0.962);transform-origin:0 0;">11.10</span>
</div>
<div class="c" style="left:421.2px;top:565.85px;width:103.6px;height:30.47px;background:#c4ddf1;font-size:19.8px;line-height:30.47px;">
<span  style="position:absolute;left:6.0px;top:0.45px;transform:scaleX(0.962);transform-origin:0 0;">n/a</span>
</div>
<div class="c" style="left:524.8px;top:565.85px;width:66.2px;height:30.47px;background:#fff;font-size:19.8px;line-height:30.47px;">
<span style="position:absolute;left:0;right:0;top:1.9px;text-align:center;padding-left:4px;transform:scaleX(1.35);">-</span>
</div>
<div class="c" style="left:591.0px;top:565.85px;width:125.4px;height:30.47px;background:#fff;font-size:19.8px;line-height:30.47px;">
<div class="cb" style="left:7.6px;top:4.4px;width:22.6px;height:23.8px;"></div>
</div>
<div class="c" style="left:716.4px;top:565.85px;width:125.8px;height:30.47px;background:#c4ddf1;font-size:19.8px;line-height:30.47px;">
<span  style="position:absolute;left:6.0px;top:0.45px;transform:scaleX(0.962);transform-origin:0 0;">300.0</span>
</div>
<div class="c" style="left:842.2px;top:565.85px;width:125.0px;height:30.47px;background:#c4ddf1;font-size:19.8px;line-height:30.47px;">
<span  style="position:absolute;left:6.0px;top:0.45px;transform:scaleX(0.962);transform-origin:0 0;">300.0</span>
</div>
<div class="c" style="left:967.2px;top:565.85px;width:125.0px;height:30.47px;background:#c4ddf1;font-size:19.8px;line-height:30.47px;">
<span  style="position:absolute;left:6.0px;top:0.45px;transform:scaleX(0.962);transform-origin:0 0;">NA</span>
</div>
<div class="c" style="left:1092.2px;top:565.85px;width:125.2px;height:30.47px;background:#c4ddf1;font-size:19.8px;line-height:30.47px;">
<span  style="position:absolute;left:6.0px;top:0.45px;transform:scaleX(0.962);transform-origin:0 0;">NA</span>
</div>
<div class="c" style="left:1217.4px;top:565.85px;width:125.2px;height:30.47px;background:#c4ddf1;font-size:19.8px;line-height:30.47px;">
<span  style="position:absolute;left:6.0px;top:0.45px;transform:scaleX(0.962);transform-origin:0 0;">0.0</span>
</div>
<div class="c" style="left:0;top:596.32px;width:71.5px;height:28.57px;background:#f0f0f0;box-shadow:inset 1.6px 1.8px 0 #fff;font-size:19.8px;line-height:30.47px;"><span id="n119" style="position:absolute;left:4.3px;top:-0.1px;transform:scaleX(.95);transform-origin:0 0;">119</span></div>
<div class="bl" style="left:0;top:624.89px;width:73.2px;height:1.9px;"></div>
<div class="c" style="left:73.2px;top:596.32px;width:190.0px;height:30.47px;background:#c4ddf1;font-size:19.8px;line-height:30.47px;">
<span  style="position:absolute;left:6.0px;top:0.45px;transform:scaleX(0.9804);transform-origin:0 0;">DATALD_B00</span>
</div>
<div class="c" style="left:263.2px;top:596.32px;width:79.3px;height:30.47px;background:#c4ddf1;font-size:19.8px;line-height:30.47px;">
<span  style="position:absolute;left:6.0px;top:0.45px;transform:scaleX(0.962);transform-origin:0 0;">152.40</span>
</div>
<div class="c" style="left:342.5px;top:596.32px;width:78.7px;height:30.47px;background:#c4ddf1;font-size:19.8px;line-height:30.47px;">
<span  style="position:absolute;left:6.0px;top:0.45px;transform:scaleX(0.962);transform-origin:0 0;">20.60</span>
</div>
<div class="c" style="left:421.2px;top:596.32px;width:103.6px;height:30.47px;background:#c4ddf1;font-size:19.8px;line-height:30.47px;">
<span  style="position:absolute;left:6.0px;top:0.45px;transform:scaleX(0.962);transform-origin:0 0;">n/a</span>
</div>
<div class="c" style="left:524.8px;top:596.32px;width:66.2px;height:30.47px;background:#fff;font-size:19.8px;line-height:30.47px;">
<span style="position:absolute;left:0;right:0;top:1.9px;text-align:center;padding-left:4px;transform:scaleX(1.35);">-</span>
</div>
<div class="c" style="left:591.0px;top:596.32px;width:125.4px;height:30.47px;background:#fff;font-size:19.8px;line-height:30.47px;">
<div class="cb" style="left:7.6px;top:4.4px;width:22.6px;height:23.8px;"></div>
</div>
<div class="c" style="left:716.4px;top:596.32px;width:125.8px;height:30.47px;background:#c4ddf1;font-size:19.8px;line-height:30.47px;">
<span  style="position:absolute;left:6.0px;top:0.45px;transform:scaleX(0.962);transform-origin:0 0;">300.0</span>
</div>
<div class="c" style="left:842.2px;top:596.32px;width:125.0px;height:30.47px;background:#c4ddf1;font-size:19.8px;line-height:30.47px;">
<span  style="position:absolute;left:6.0px;top:0.45px;transform:scaleX(0.962);transform-origin:0 0;">300.0</span>
</div>
<div class="c" style="left:967.2px;top:596.32px;width:125.0px;height:30.47px;background:#c4ddf1;font-size:19.8px;line-height:30.47px;">
<span  style="position:absolute;left:6.0px;top:0.45px;transform:scaleX(0.962);transform-origin:0 0;">NA</span>
</div>
<div class="c" style="left:1092.2px;top:596.32px;width:125.2px;height:30.47px;background:#c4ddf1;font-size:19.8px;line-height:30.47px;">
<span  style="position:absolute;left:6.0px;top:0.45px;transform:scaleX(0.962);transform-origin:0 0;">NA</span>
</div>
<div class="c" style="left:1217.4px;top:596.32px;width:125.2px;height:30.47px;background:#c4ddf1;font-size:19.8px;line-height:30.47px;">
<span  style="position:absolute;left:6.0px;top:0.45px;transform:scaleX(0.962);transform-origin:0 0;">0.0</span>
</div>
<div class="c" style="left:0;top:626.79px;width:71.5px;height:28.57px;background:#f0f0f0;box-shadow:inset 1.6px 1.8px 0 #fff;font-size:19.8px;line-height:30.47px;"><span id="n120" style="position:absolute;left:4.3px;top:-0.1px;transform:scaleX(.95);transform-origin:0 0;">120</span></div>
<div class="bl" style="left:0;top:655.36px;width:73.2px;height:1.9px;"></div>
<div class="c" style="left:73.2px;top:626.79px;width:190.0px;height:30.47px;background:#c4ddf1;font-size:19.8px;line-height:30.47px;">
<span  style="position:absolute;left:6.0px;top:0.45px;transform:scaleX(0.8893);transform-origin:0 0;">FERRITE1_B00</span>
</div>
<div class="c" style="left:263.2px;top:626.79px;width:79.3px;height:30.47px;background:#c4ddf1;font-size:19.8px;line-height:30.47px;">
<span  style="position:absolute;left:6.0px;top:0.45px;transform:scaleX(0.962);transform-origin:0 0;">152.40</span>
</div>
<div class="c" style="left:342.5px;top:626.79px;width:78.7px;height:30.47px;background:#c4ddf1;font-size:19.8px;line-height:30.47px;">
<span  style="position:absolute;left:6.0px;top:0.45px;transform:scaleX(0.962);transform-origin:0 0;">1.04</span>
</div>
<div class="c" style="left:421.2px;top:626.79px;width:103.6px;height:30.47px;background:#c4ddf1;font-size:19.8px;line-height:30.47px;">
<span  style="position:absolute;left:6.0px;top:0.45px;transform:scaleX(0.962);transform-origin:0 0;">n/a</span>
</div>
<div class="c" style="left:524.8px;top:626.79px;width:66.2px;height:30.47px;background:#fff;font-size:19.8px;line-height:30.47px;">
<span style="position:absolute;left:0;right:0;top:1.9px;text-align:center;padding-left:4px;transform:scaleX(1.35);">-</span>
</div>
<div class="c" style="left:591.0px;top:626.79px;width:125.4px;height:30.47px;background:#fff;font-size:19.8px;line-height:30.47px;">
<div class="cb" style="left:7.6px;top:4.4px;width:22.6px;height:23.8px;"></div>
</div>
<div class="c" style="left:716.4px;top:626.79px;width:125.8px;height:30.47px;background:#c4ddf1;font-size:19.8px;line-height:30.47px;">
<span  style="position:absolute;left:6.0px;top:0.45px;transform:scaleX(0.962);transform-origin:0 0;">300.0</span>
</div>
<div class="c" style="left:842.2px;top:626.79px;width:125.0px;height:30.47px;background:#c4ddf1;font-size:19.8px;line-height:30.47px;">
<span  style="position:absolute;left:6.0px;top:0.45px;transform:scaleX(0.962);transform-origin:0 0;">300.0</span>
</div>
<div class="c" style="left:967.2px;top:626.79px;width:125.0px;height:30.47px;background:#c4ddf1;font-size:19.8px;line-height:30.47px;">
<span  style="position:absolute;left:6.0px;top:0.45px;transform:scaleX(0.962);transform-origin:0 0;">NA</span>
</div>
<div class="c" style="left:1092.2px;top:626.79px;width:125.2px;height:30.47px;background:#c4ddf1;font-size:19.8px;line-height:30.47px;">
<span  style="position:absolute;left:6.0px;top:0.45px;transform:scaleX(0.962);transform-origin:0 0;">NA</span>
</div>
<div class="c" style="left:1217.4px;top:626.79px;width:125.2px;height:30.47px;background:#c4ddf1;font-size:19.8px;line-height:30.47px;">
<span  style="position:absolute;left:6.0px;top:0.45px;transform:scaleX(0.962);transform-origin:0 0;">0.0</span>
</div>
<div class="c" style="left:0;top:657.26px;width:71.5px;height:28.57px;background:#f0f0f0;box-shadow:inset 1.6px 1.8px 0 #fff;font-size:19.8px;line-height:30.47px;"><span id="n121" style="position:absolute;left:4.3px;top:-0.1px;transform:scaleX(.95);transform-origin:0 0;">121</span></div>
<div class="bl" style="left:0;top:685.83px;width:73.2px;height:1.9px;"></div>
<div class="c" style="left:73.2px;top:657.26px;width:190.0px;height:30.47px;background:#c4ddf1;font-size:19.8px;line-height:30.47px;">
<span  style="position:absolute;left:6.0px;top:0.45px;transform:scaleX(0.8893);transform-origin:0 0;">FERRITE2_B00</span>
</div>
<div class="c" style="left:263.2px;top:657.26px;width:79.3px;height:30.47px;background:#c4ddf1;font-size:19.8px;line-height:30.47px;">
<span  style="position:absolute;left:6.0px;top:0.45px;transform:scaleX(0.962);transform-origin:0 0;">152.40</span>
</div>
<div class="c" style="left:342.5px;top:657.26px;width:78.7px;height:30.47px;background:#c4ddf1;font-size:19.8px;line-height:30.47px;">
<span  style="position:absolute;left:6.0px;top:0.45px;transform:scaleX(0.962);transform-origin:0 0;">5.40</span>
</div>
<div class="c" style="left:421.2px;top:657.26px;width:103.6px;height:30.47px;background:#c4ddf1;font-size:19.8px;line-height:30.47px;">
<span  style="position:absolute;left:6.0px;top:0.45px;transform:scaleX(0.962);transform-origin:0 0;">n/a</span>
</div>
<div class="c" style="left:524.8px;top:657.26px;width:66.2px;height:30.47px;background:#fff;font-size:19.8px;line-height:30.47px;">
<span style="position:absolute;left:0;right:0;top:1.9px;text-align:center;padding-left:4px;transform:scaleX(1.35);">-</span>
</div>
<div class="c" style="left:591.0px;top:657.26px;width:125.4px;height:30.47px;background:#fff;font-size:19.8px;line-height:30.47px;">
<div class="cb" style="left:7.6px;top:4.4px;width:22.6px;height:23.8px;"></div>
</div>
<div class="c" style="left:716.4px;top:657.26px;width:125.8px;height:30.47px;background:#c4ddf1;font-size:19.8px;line-height:30.47px;">
<span  style="position:absolute;left:6.0px;top:0.45px;transform:scaleX(0.962);transform-origin:0 0;">300.0</span>
</div>
<div class="c" style="left:842.2px;top:657.26px;width:125.0px;height:30.47px;background:#c4ddf1;font-size:19.8px;line-height:30.47px;">
<span  style="position:absolute;left:6.0px;top:0.45px;transform:scaleX(0.962);transform-origin:0 0;">300.0</span>
</div>
<div class="c" style="left:967.2px;top:657.26px;width:125.0px;height:30.47px;background:#c4ddf1;font-size:19.8px;line-height:30.47px;">
<span  style="position:absolute;left:6.0px;top:0.45px;transform:scaleX(0.962);transform-origin:0 0;">NA</span>
</div>
<div class="c" style="left:1092.2px;top:657.26px;width:125.2px;height:30.47px;background:#c4ddf1;font-size:19.8px;line-height:30.47px;">
<span  style="position:absolute;left:6.0px;top:0.45px;transform:scaleX(0.962);transform-origin:0 0;">NA</span>
</div>
<div class="c" style="left:1217.4px;top:657.26px;width:125.2px;height:30.47px;background:#c4ddf1;font-size:19.8px;line-height:30.47px;">
<span  style="position:absolute;left:6.0px;top:0.45px;transform:scaleX(0.962);transform-origin:0 0;">0.0</span>
</div>
<div class="c" style="left:0;top:687.73px;width:71.5px;height:28.57px;background:#f0f0f0;box-shadow:inset 1.6px 1.8px 0 #fff;font-size:19.8px;line-height:30.47px;"><span id="n122" style="position:absolute;left:4.3px;top:-0.1px;transform:scaleX(.95);transform-origin:0 0;">122</span></div>
<div class="bl" style="left:0;top:716.30px;width:73.2px;height:1.9px;"></div>
<div class="c" style="left:73.2px;top:687.73px;width:190.0px;height:30.47px;background:#c4ddf1;font-size:19.8px;line-height:30.47px;">
<span  style="position:absolute;left:6.0px;top:0.45px;transform:scaleX(0.8887);transform-origin:0 0;">FERRITENOT_B00</span>
</div>
<div class="c" style="left:263.2px;top:687.73px;width:79.3px;height:30.47px;background:#c4ddf1;font-size:19.8px;line-height:30.47px;">
<span  style="position:absolute;left:6.0px;top:0.45px;transform:scaleX(0.962);transform-origin:0 0;">152.40</span>
</div>
<div class="c" style="left:342.5px;top:687.73px;width:78.7px;height:30.47px;background:#c4ddf1;font-size:19.8px;line-height:30.47px;">
<span  style="position:absolute;left:6.0px;top:0.45px;transform:scaleX(0.962);transform-origin:0 0;">6.64</span>
</div>
<div class="c" style="left:421.2px;top:687.73px;width:103.6px;height:30.47px;background:#c4ddf1;font-size:19.8px;line-height:30.47px;">
<span  style="position:absolute;left:6.0px;top:0.45px;transform:scaleX(0.962);transform-origin:0 0;">n/a</span>
</div>
<div class="c" style="left:524.8px;top:687.73px;width:66.2px;height:30.47px;background:#fff;font-size:19.8px;line-height:30.47px;">
<span style="position:absolute;left:0;right:0;top:1.9px;text-align:center;padding-left:4px;transform:scaleX(1.35);">-</span>
</div>
<div class="c" style="left:591.0px;top:687.73px;width:125.4px;height:30.47px;background:#fff;font-size:19.8px;line-height:30.47px;">
<div class="cb" style="left:7.6px;top:4.4px;width:22.6px;height:23.8px;"></div>
</div>
<div class="c" style="left:716.4px;top:687.73px;width:125.8px;height:30.47px;background:#c4ddf1;font-size:19.8px;line-height:30.47px;">
<span  style="position:absolute;left:6.0px;top:0.45px;transform:scaleX(0.962);transform-origin:0 0;">300.0</span>
</div>
<div class="c" style="left:842.2px;top:687.73px;width:125.0px;height:30.47px;background:#c4ddf1;font-size:19.8px;line-height:30.47px;">
<span  style="position:absolute;left:6.0px;top:0.45px;transform:scaleX(0.962);transform-origin:0 0;">300.0</span>
</div>
<div class="c" style="left:967.2px;top:687.73px;width:125.0px;height:30.47px;background:#c4ddf1;font-size:19.8px;line-height:30.47px;">
<span  style="position:absolute;left:6.0px;top:0.45px;transform:scaleX(0.962);transform-origin:0 0;">NA</span>
</div>
<div class="c" style="left:1092.2px;top:687.73px;width:125.2px;height:30.47px;background:#c4ddf1;font-size:19.8px;line-height:30.47px;">
<span  style="position:absolute;left:6.0px;top:0.45px;transform:scaleX(0.962);transform-origin:0 0;">NA</span>
</div>
<div class="c" style="left:1217.4px;top:687.73px;width:125.2px;height:30.47px;background:#c4ddf1;font-size:19.8px;line-height:30.47px;">
<span  style="position:absolute;left:6.0px;top:0.45px;transform:scaleX(0.962);transform-origin:0 0;">0.0</span>
</div>
<div class="c" style="left:0;top:718.20px;width:71.5px;height:28.57px;background:#f0f0f0;box-shadow:inset 1.6px 1.8px 0 #fff;font-size:19.8px;line-height:30.47px;"><span id="n123" style="position:absolute;left:4.3px;top:-0.1px;transform:scaleX(.95);transform-origin:0 0;">123</span></div>
<div class="bl" style="left:0;top:746.77px;width:73.2px;height:1.9px;"></div>
<div class="c" style="left:73.2px;top:718.20px;width:190.0px;height:30.47px;background:#c4ddf1;font-size:19.8px;line-height:30.47px;">
<span  style="position:absolute;left:6.0px;top:0.45px;transform:scaleX(0.9407);transform-origin:0 0;">GSYNC+_B00</span>
</div>
<div class="c" style="left:263.2px;top:718.20px;width:79.3px;height:30.47px;background:#c4ddf1;font-size:19.8px;line-height:30.47px;">
<span  style="position:absolute;left:6.0px;top:0.45px;transform:scaleX(0.962);transform-origin:0 0;">152.40</span>
</div>
<div class="c" style="left:342.5px;top:718.20px;width:78.7px;height:30.47px;background:#c4ddf1;font-size:19.8px;line-height:30.47px;">
<span  style="position:absolute;left:6.0px;top:0.45px;transform:scaleX(0.962);transform-origin:0 0;">6.42</span>
</div>
<div class="c" style="left:421.2px;top:718.20px;width:103.6px;height:30.47px;background:#c4ddf1;font-size:19.8px;line-height:30.47px;">
<span  style="position:absolute;left:6.0px;top:0.45px;transform:scaleX(0.962);transform-origin:0 0;">n/a</span>
</div>
<div class="c" style="left:524.8px;top:718.20px;width:66.2px;height:30.47px;background:#fff;font-size:19.8px;line-height:30.47px;">
<span style="position:absolute;left:0;right:0;top:1.9px;text-align:center;padding-left:4px;transform:scaleX(1.35);">-</span>
</div>
<div class="c" style="left:591.0px;top:718.20px;width:125.4px;height:30.47px;background:#fff;font-size:19.8px;line-height:30.47px;">
<div class="cb" style="left:7.6px;top:4.4px;width:22.6px;height:23.8px;"></div>
</div>
<div class="c" style="left:716.4px;top:718.20px;width:125.8px;height:30.47px;background:#c4ddf1;font-size:19.8px;line-height:30.47px;">
<span  style="position:absolute;left:6.0px;top:0.45px;transform:scaleX(0.962);transform-origin:0 0;">300.0</span>
</div>
<div class="c" style="left:842.2px;top:718.20px;width:125.0px;height:30.47px;background:#c4ddf1;font-size:19.8px;line-height:30.47px;">
<span  style="position:absolute;left:6.0px;top:0.45px;transform:scaleX(0.962);transform-origin:0 0;">300.0</span>
</div>
<div class="c" style="left:967.2px;top:718.20px;width:125.0px;height:30.47px;background:#c4ddf1;font-size:19.8px;line-height:30.47px;">
<span  style="position:absolute;left:6.0px;top:0.45px;transform:scaleX(0.962);transform-origin:0 0;">NA</span>
</div>
<div class="c" style="left:1092.2px;top:718.20px;width:125.2px;height:30.47px;background:#c4ddf1;font-size:19.8px;line-height:30.47px;">
<span  style="position:absolute;left:6.0px;top:0.45px;transform:scaleX(0.962);transform-origin:0 0;">NA</span>
</div>
<div class="c" style="left:1217.4px;top:718.20px;width:125.2px;height:30.47px;background:#c4ddf1;font-size:19.8px;line-height:30.47px;">
<span  style="position:absolute;left:6.0px;top:0.45px;transform:scaleX(0.962);transform-origin:0 0;">0.0</span>
</div>
<div class="c" style="left:0;top:748.67px;width:71.5px;height:28.57px;background:#f0f0f0;box-shadow:inset 1.6px 1.8px 0 #fff;font-size:19.8px;line-height:30.47px;"><span id="n124" style="position:absolute;left:4.3px;top:-0.1px;transform:scaleX(.95);transform-origin:0 0;">124</span></div>
<div class="bl" style="left:0;top:777.24px;width:73.2px;height:1.9px;"></div>
<div class="c" style="left:73.2px;top:748.67px;width:190.0px;height:30.47px;background:#c4ddf1;font-size:19.8px;line-height:30.47px;">
<span  style="position:absolute;left:6.0px;top:0.45px;transform:scaleX(0.9497);transform-origin:0 0;">GSYNC-_B00</span>
</div>
<div class="c" style="left:263.2px;top:748.67px;width:79.3px;height:30.47px;background:#c4ddf1;font-size:19.8px;line-height:30.47px;">
<span  style="position:absolute;left:6.0px;top:0.45px;transform:scaleX(0.962);transform-origin:0 0;">152.40</span>
</div>
<div class="c" style="left:342.5px;top:748.67px;width:78.7px;height:30.47px;background:#c4ddf1;font-size:19.8px;line-height:30.47px;">
<span  style="position:absolute;left:6.0px;top:0.45px;transform:scaleX(0.962);transform-origin:0 0;">6.75</span>
</div>
<div class="c" style="left:421.2px;top:748.67px;width:103.6px;height:30.47px;background:#c4ddf1;font-size:19.8px;line-height:30.47px;">
<span  style="position:absolute;left:6.0px;top:0.45px;transform:scaleX(0.962);transform-origin:0 0;">n/a</span>
</div>
<div class="c" style="left:524.8px;top:748.67px;width:66.2px;height:30.47px;background:#fff;font-size:19.8px;line-height:30.47px;">
<span style="position:absolute;left:0;right:0;top:1.9px;text-align:center;padding-left:4px;transform:scaleX(1.35);">-</span>
</div>
<div class="c" style="left:591.0px;top:748.67px;width:125.4px;height:30.47px;background:#fff;font-size:19.8px;line-height:30.47px;">
<div class="cb" style="left:7.6px;top:4.4px;width:22.6px;height:23.8px;"></div>
</div>
<div class="c" style="left:716.4px;top:748.67px;width:125.8px;height:30.47px;background:#c4ddf1;font-size:19.8px;line-height:30.47px;">
<span  style="position:absolute;left:6.0px;top:0.45px;transform:scaleX(0.962);transform-origin:0 0;">300.0</span>
</div>
<div class="c" style="left:842.2px;top:748.67px;width:125.0px;height:30.47px;background:#c4ddf1;font-size:19.8px;line-height:30.47px;">
<span  style="position:absolute;left:6.0px;top:0.45px;transform:scaleX(0.962);transform-origin:0 0;">300.0</span>
</div>
<div class="c" style="left:967.2px;top:748.67px;width:125.0px;height:30.47px;background:#c4ddf1;font-size:19.8px;line-height:30.47px;">
<span  style="position:absolute;left:6.0px;top:0.45px;transform:scaleX(0.962);transform-origin:0 0;">NA</span>
</div>
<div class="c" style="left:1092.2px;top:748.67px;width:125.2px;height:30.47px;background:#c4ddf1;font-size:19.8px;line-height:30.47px;">
<span  style="position:absolute;left:6.0px;top:0.45px;transform:scaleX(0.962);transform-origin:0 0;">NA</span>
</div>
<div class="c" style="left:1217.4px;top:748.67px;width:125.2px;height:30.47px;background:#c4ddf1;font-size:19.8px;line-height:30.47px;">
<span  style="position:absolute;left:6.0px;top:0.45px;transform:scaleX(0.962);transform-origin:0 0;">0.0</span>
</div>
<div class="c" style="left:0;top:779.14px;width:71.5px;height:28.57px;background:#f0f0f0;box-shadow:inset 1.6px 1.8px 0 #fff;font-size:19.8px;line-height:30.47px;"><span id="n125" style="position:absolute;left:4.3px;top:-0.1px;transform:scaleX(.95);transform-origin:0 0;">125</span></div>
<div class="bl" style="left:0;top:807.71px;width:73.2px;height:1.9px;"></div>
<div class="c" style="left:73.2px;top:779.14px;width:190.0px;height:30.47px;background:#c4ddf1;font-size:19.8px;line-height:30.47px;">
<span  style="position:absolute;left:6.0px;top:0.45px;transform:scaleX(0.9408);transform-origin:0 0;">IMP_A5_B00</span>
</div>
<div class="c" style="left:263.2px;top:779.14px;width:79.3px;height:30.47px;background:#c4ddf1;font-size:19.8px;line-height:30.47px;">
<span  style="position:absolute;left:6.0px;top:0.45px;transform:scaleX(0.962);transform-origin:0 0;">152.40</span>
</div>
<div class="c" style="left:342.5px;top:779.14px;width:78.7px;height:30.47px;background:#c4ddf1;font-size:19.8px;line-height:30.47px;">
<span  style="position:absolute;left:6.0px;top:0.45px;transform:scaleX(0.962);transform-origin:0 0;">3.80</span>
</div>
<div class="c" style="left:421.2px;top:779.14px;width:103.6px;height:30.47px;background:#c4ddf1;font-size:19.8px;line-height:30.47px;">
<span  style="position:absolute;left:6.0px;top:0.45px;transform:scaleX(0.962);transform-origin:0 0;">n/a</span>
</div>
<div class="c" style="left:524.8px;top:779.14px;width:66.2px;height:30.47px;background:#fff;font-size:19.8px;line-height:30.47px;">
<span style="position:absolute;left:0;right:0;top:1.9px;text-align:center;padding-left:4px;transform:scaleX(1.35);">-</span>
</div>
<div class="c" style="left:591.0px;top:779.14px;width:125.4px;height:30.47px;background:#fff;font-size:19.8px;line-height:30.47px;">
<div class="cb" style="left:7.6px;top:4.4px;width:22.6px;height:23.8px;"></div>
<svg style="position:absolute;left:10.6px;top:7.5px" width="18" height="17" viewBox="0 0 18 17"><path d="M2.2 7.4 L7.2 12 L15 2" stroke="#000" stroke-width="3.5" fill="none"/></svg>
</div>
<div class="c" style="left:716.4px;top:779.14px;width:125.8px;height:30.47px;background:#fff;font-size:19.8px;line-height:30.47px;">
<span  style="position:absolute;left:6.0px;top:0.45px;transform:scaleX(0.962);transform-origin:0 0;">300.0</span>
</div>
<div class="c" style="left:842.2px;top:779.14px;width:125.0px;height:30.47px;background:#fff;font-size:19.8px;line-height:30.47px;">
<span  style="position:absolute;left:6.0px;top:0.45px;transform:scaleX(0.962);transform-origin:0 0;">300.0</span>
</div>
<div class="c" style="left:967.2px;top:779.14px;width:125.0px;height:30.47px;background:#fff;font-size:19.8px;line-height:30.47px;">
<span  style="position:absolute;left:6.0px;top:0.45px;transform:scaleX(0.962);transform-origin:0 0;">NA</span>
</div>
<div class="c" style="left:1092.2px;top:779.14px;width:125.2px;height:30.47px;background:#fff;font-size:19.8px;line-height:30.47px;">
<span  style="position:absolute;left:6.0px;top:0.45px;transform:scaleX(0.962);transform-origin:0 0;">NA</span>
</div>
<div class="c" style="left:1217.4px;top:779.14px;width:125.2px;height:30.47px;background:#fff;font-size:19.8px;line-height:30.47px;">
<span  style="position:absolute;left:6.0px;top:0.45px;transform:scaleX(0.962);transform-origin:0 0;">0.0</span>
</div>
<div class="c" style="left:0;top:809.61px;width:71.5px;height:28.57px;background:#f0f0f0;box-shadow:inset 1.6px 1.8px 0 #fff;font-size:19.8px;line-height:30.47px;"><span id="n126" style="position:absolute;left:4.3px;top:-0.1px;transform:scaleX(.95);transform-origin:0 0;">126</span></div>
<div class="bl" style="left:0;top:838.18px;width:73.2px;height:1.9px;"></div>
<div class="c" style="left:73.2px;top:809.61px;width:190.0px;height:30.47px;background:#c4ddf1;font-size:19.8px;line-height:30.47px;">
<span  style="position:absolute;left:6.0px;top:0.45px;transform:scaleX(0.9408);transform-origin:0 0;">IMP_A6_B00</span>
</div>
<div class="c" style="left:263.2px;top:809.61px;width:79.3px;height:30.47px;background:#c4ddf1;font-size:19.8px;line-height:30.47px;">
<span  style="position:absolute;left:6.0px;top:0.45px;transform:scaleX(0.962);transform-origin:0 0;">152.40</span>
</div>
<div class="c" style="left:342.5px;top:809.61px;width:78.7px;height:30.47px;background:#c4ddf1;font-size:19.8px;line-height:30.47px;">
<span  style="position:absolute;left:6.0px;top:0.45px;transform:scaleX(0.962);transform-origin:0 0;">3.79</span>
</div>
<div class="c" style="left:421.2px;top:809.61px;width:103.6px;height:30.47px;background:#c4ddf1;font-size:19.8px;line-height:30.47px;">
<span  style="position:absolute;left:6.0px;top:0.45px;transform:scaleX(0.962);transform-origin:0 0;">n/a</span>
</div>
<div class="c" style="left:524.8px;top:809.61px;width:66.2px;height:30.47px;background:#fff;font-size:19.8px;line-height:30.47px;">
<span style="position:absolute;left:0;right:0;top:1.9px;text-align:center;padding-left:4px;transform:scaleX(1.35);">-</span>
</div>
<div class="c" style="left:591.0px;top:809.61px;width:125.4px;height:30.47px;background:#fff;font-size:19.8px;line-height:30.47px;">
<div class="cb" style="left:7.6px;top:4.4px;width:22.6px;height:23.8px;"></div>
<svg style="position:absolute;left:10.6px;top:7.5px" width="18" height="17" viewBox="0 0 18 17"><path d="M2.2 7.4 L7.2 12 L15 2" stroke="#000" stroke-width="3.5" fill="none"/></svg>
</div>
<div class="c" style="left:716.4px;top:809.61px;width:125.8px;height:30.47px;background:#fff;font-size:19.8px;line-height:30.47px;">
<span  style="position:absolute;left:6.0px;top:0.45px;transform:scaleX(0.962);transform-origin:0 0;">300.0</span>
</div>
<div class="c" style="left:842.2px;top:809.61px;width:125.0px;height:30.47px;background:#fff;font-size:19.8px;line-height:30.47px;">
<span  style="position:absolute;left:6.0px;top:0.45px;transform:scaleX(0.962);transform-origin:0 0;">300.0</span>
</div>
<div class="c" style="left:967.2px;top:809.61px;width:125.0px;height:30.47px;background:#fff;font-size:19.8px;line-height:30.47px;">
<span  style="position:absolute;left:6.0px;top:0.45px;transform:scaleX(0.962);transform-origin:0 0;">NA</span>
</div>
<div class="c" style="left:1092.2px;top:809.61px;width:125.2px;height:30.47px;background:#fff;font-size:19.8px;line-height:30.47px;">
<span  style="position:absolute;left:6.0px;top:0.45px;transform:scaleX(0.962);transform-origin:0 0;">NA</span>
</div>
<div class="c" style="left:1217.4px;top:809.61px;width:125.2px;height:30.47px;background:#fff;font-size:19.8px;line-height:30.47px;">
<span  style="position:absolute;left:6.0px;top:0.45px;transform:scaleX(0.962);transform-origin:0 0;">0.0</span>
</div>
<div class="c" style="left:0;top:840.08px;width:71.5px;height:28.57px;background:#f0f0f0;font-size:19.8px;line-height:30.47px;"><span id="n127" style="position:absolute;left:5.9px;top:2.4px;transform:scaleX(.95);transform-origin:0 0;">127</span></div>
<div class="bl" style="left:0;top:868.65px;width:73.2px;height:1.9px;"></div>
<div class="c" style="left:73.2px;top:840.08px;width:190.0px;height:30.47px;background:#c4ddf1;font-size:19.8px;line-height:30.47px;">
<span  style="position:absolute;left:6.0px;top:0.45px;transform:scaleX(0.9408);transform-origin:0 0;">IMP_A7_B00</span>
</div>
<div class="c" style="left:263.2px;top:840.08px;width:79.3px;height:30.47px;background:#c4ddf1;font-size:19.8px;line-height:30.47px;">
<span  style="position:absolute;left:6.0px;top:0.45px;transform:scaleX(0.962);transform-origin:0 0;">152.40</span>
</div>
<div class="c" style="left:342.5px;top:840.08px;width:78.7px;height:30.47px;background:#c4ddf1;font-size:19.8px;line-height:30.47px;">
<span  style="position:absolute;left:6.0px;top:0.45px;transform:scaleX(0.962);transform-origin:0 0;">3.86</span>
</div>
<div class="c" style="left:421.2px;top:840.08px;width:103.6px;height:30.47px;background:#c4ddf1;font-size:19.8px;line-height:30.47px;">
<span  style="position:absolute;left:6.0px;top:0.45px;transform:scaleX(0.962);transform-origin:0 0;">n/a</span>
</div>
<div class="c" style="left:524.8px;top:840.08px;width:66.2px;height:30.47px;background:#fff;font-size:19.8px;line-height:30.47px;">
<span style="position:absolute;left:0;right:0;top:1.9px;text-align:center;padding-left:4px;transform:scaleX(1.35);">-</span>
</div>
<div class="c" style="left:591.0px;top:840.08px;width:125.4px;height:30.47px;background:#fff;font-size:19.8px;line-height:30.47px;">
<div class="cb" style="left:7.6px;top:4.4px;width:22.6px;height:23.8px;"></div>
<svg style="position:absolute;left:10.6px;top:7.5px" width="18" height="17" viewBox="0 0 18 17"><path d="M2.2 7.4 L7.2 12 L15 2" stroke="#000" stroke-width="3.5" fill="none"/></svg>
</div>
<div class="c" style="left:716.4px;top:840.08px;width:125.8px;height:30.47px;background:#fff;font-size:19.8px;line-height:30.47px;">
<span  style="position:absolute;left:6.0px;top:0.45px;transform:scaleX(0.962);transform-origin:0 0;">300.0</span>
</div>
<div class="c" style="left:842.2px;top:840.08px;width:125.0px;height:30.47px;background:#fff;font-size:19.8px;line-height:30.47px;">
<span  style="position:absolute;left:6.0px;top:0.45px;transform:scaleX(0.962);transform-origin:0 0;">300.0</span>
</div>
<div class="c" style="left:967.2px;top:840.08px;width:125.0px;height:30.47px;background:#fff;font-size:19.8px;line-height:30.47px;">
<span  style="position:absolute;left:6.0px;top:0.45px;transform:scaleX(0.962);transform-origin:0 0;">NA</span>
</div>
<div class="c" style="left:1092.2px;top:840.08px;width:125.2px;height:30.47px;background:#fff;font-size:19.8px;line-height:30.47px;">
<span  style="position:absolute;left:6.0px;top:0.45px;transform:scaleX(0.962);transform-origin:0 0;">NA</span>
</div>
<div class="c" style="left:1217.4px;top:840.08px;width:125.2px;height:30.47px;background:#fff;font-size:19.8px;line-height:30.47px;">
<span  style="position:absolute;left:6.0px;top:0.45px;transform:scaleX(0.962);transform-origin:0 0;">0.0</span>
</div>
<div class="c" style="left:0;top:870.55px;width:71.5px;height:28.57px;background:#f0f0f0;box-shadow:inset 1.6px 1.8px 0 #fff;font-size:19.8px;line-height:30.47px;"><span id="n128" style="position:absolute;left:4.3px;top:-0.1px;transform:scaleX(.95);transform-origin:0 0;">128</span></div>
<div class="bl" style="left:0;top:899.12px;width:73.2px;height:1.9px;"></div>
<div class="c" style="left:73.2px;top:870.55px;width:190.0px;height:30.47px;background:#c4ddf1;font-size:19.8px;line-height:30.47px;">
<span  style="position:absolute;left:6.0px;top:0.45px;transform:scaleX(0.9408);transform-origin:0 0;">IMP_A8_B00</span>
</div>
<div class="c" style="left:263.2px;top:870.55px;width:79.3px;height:30.47px;background:#c4ddf1;font-size:19.8px;line-height:30.47px;">
<span  style="position:absolute;left:6.0px;top:0.45px;transform:scaleX(0.962);transform-origin:0 0;">152.40</span>
</div>
<div class="c" style="left:342.5px;top:870.55px;width:78.7px;height:30.47px;background:#c4ddf1;font-size:19.8px;line-height:30.47px;">
<span  style="position:absolute;left:6.0px;top:0.45px;transform:scaleX(0.962);transform-origin:0 0;">3.83</span>
</div>
<div class="c" style="left:421.2px;top:870.55px;width:103.6px;height:30.47px;background:#c4ddf1;font-size:19.8px;line-height:30.47px;">
<span  style="position:absolute;left:6.0px;top:0.45px;transform:scaleX(0.962);transform-origin:0 0;">n/a</span>
</div>
<div class="c" style="left:524.8px;top:870.55px;width:66.2px;height:30.47px;background:#fff;font-size:19.8px;line-height:30.47px;">
<span style="position:absolute;left:0;right:0;top:1.9px;text-align:center;padding-left:4px;transform:scaleX(1.35);">-</span>
</div>
<div class="c" style="left:591.0px;top:870.55px;width:125.4px;height:30.47px;background:#fff;font-size:19.8px;line-height:30.47px;">
<div class="cb" style="left:7.6px;top:4.4px;width:22.6px;height:23.8px;"></div>
</div>
<div class="c" style="left:716.4px;top:870.55px;width:125.8px;height:30.47px;background:#c4ddf1;font-size:19.8px;line-height:30.47px;">
<span  style="position:absolute;left:6.0px;top:0.45px;transform:scaleX(0.962);transform-origin:0 0;">300.0</span>
</div>
<div class="c" style="left:842.2px;top:870.55px;width:125.0px;height:30.47px;background:#c4ddf1;font-size:19.8px;line-height:30.47px;">
<span  style="position:absolute;left:6.0px;top:0.45px;transform:scaleX(0.962);transform-origin:0 0;">300.0</span>
</div>
<div class="c" style="left:967.2px;top:870.55px;width:125.0px;height:30.47px;background:#c4ddf1;font-size:19.8px;line-height:30.47px;">
<span  style="position:absolute;left:6.0px;top:0.45px;transform:scaleX(0.962);transform-origin:0 0;">NA</span>
</div>
<div class="c" style="left:1092.2px;top:870.55px;width:125.2px;height:30.47px;background:#c4ddf1;font-size:19.8px;line-height:30.47px;">
<span  style="position:absolute;left:6.0px;top:0.45px;transform:scaleX(0.962);transform-origin:0 0;">NA</span>
</div>
<div class="c" style="left:1217.4px;top:870.55px;width:125.2px;height:30.47px;background:#c4ddf1;font-size:19.8px;line-height:30.47px;">
<span  style="position:absolute;left:6.0px;top:0.45px;transform:scaleX(0.962);transform-origin:0 0;">0.0</span>
</div>
<div class="c" style="left:0;top:901.02px;width:71.5px;height:28.57px;background:#f0f0f0;box-shadow:inset 1.6px 1.8px 0 #fff;font-size:19.8px;line-height:30.47px;"><span id="n129" style="position:absolute;left:4.3px;top:-0.1px;transform:scaleX(.95);transform-origin:0 0;">129</span></div>
<div class="bl" style="left:0;top:929.59px;width:73.2px;height:1.9px;"></div>
<div class="c" style="left:73.2px;top:901.02px;width:190.0px;height:30.47px;background:#c4ddf1;font-size:19.8px;line-height:30.47px;">
<span id=t129_1 style="position:absolute;left:6.0px;top:0.45px;transform:scaleX(0.9052);transform-origin:0 0;">INDUCTOR_IN_B00</span>
</div>
<div class="c" style="left:263.2px;top:901.02px;width:79.3px;height:30.47px;background:#c4ddf1;font-size:19.8px;line-height:30.47px;">
<span id=t129_2 style="position:absolute;left:6.0px;top:0.45px;transform:scaleX(0.962);transform-origin:0 0;">152.40</span>
</div>
<div class="c" style="left:342.5px;top:901.02px;width:78.7px;height:30.47px;background:#c4ddf1;font-size:19.8px;line-height:30.47px;">
<span id=t129_3 style="position:absolute;left:6.0px;top:0.45px;transform:scaleX(0.962);transform-origin:0 0;">0.42</span>
</div>
<div class="c" style="left:421.2px;top:901.02px;width:103.6px;height:30.47px;background:#c4ddf1;font-size:19.8px;line-height:30.47px;">
<span id=t129_4 style="position:absolute;left:6.0px;top:0.45px;transform:scaleX(0.962);transform-origin:0 0;">n/a</span>
</div>
<div class="c" style="left:524.8px;top:901.02px;width:66.2px;height:30.47px;background:#fff;font-size:19.8px;line-height:30.47px;">
<span style="position:absolute;left:0;right:0;top:1.9px;text-align:center;padding-left:4px;transform:scaleX(1.35);">-</span>
</div>
<div class="c" style="left:591.0px;top:901.02px;width:125.4px;height:30.47px;background:#fff;font-size:19.8px;line-height:30.47px;">
<div class="cb" style="left:7.6px;top:4.4px;width:22.6px;height:23.8px;"></div>
</div>
<div class="c" style="left:716.4px;top:901.02px;width:125.8px;height:30.47px;background:#c4ddf1;font-size:19.8px;line-height:30.47px;">
<span id=t129_7 style="position:absolute;left:6.0px;top:0.45px;transform:scaleX(0.962);transform-origin:0 0;">300.0</span>
</div>
<div class="c" style="left:842.2px;top:901.02px;width:125.0px;height:30.47px;background:#c4ddf1;font-size:19.8px;line-height:30.47px;">
<span id=t129_8 style="position:absolute;left:6.0px;top:0.45px;transform:scaleX(0.962);transform-origin:0 0;">300.0</span>
</div>
<div class="c" style="left:967.2px;top:901.02px;width:125.0px;height:30.47px;background:#c4ddf1;font-size:19.8px;line-height:30.47px;">
<span id=t129_9 style="position:absolute;left:6.0px;top:0.45px;transform:scaleX(0.962);transform-origin:0 0;">NA</span>
</div>
<div class="c" style="left:1092.2px;top:901.02px;width:125.2px;height:30.47px;background:#c4ddf1;font-size:19.8px;line-height:30.47px;">
<span id=t129_10 style="position:absolute;left:6.0px;top:0.45px;transform:scaleX(0.962);transform-origin:0 0;">NA</span>
</div>
<div class="c" style="left:1217.4px;top:901.02px;width:125.2px;height:30.47px;background:#c4ddf1;font-size:19.8px;line-height:30.47px;">
<span id=t129_11 style="position:absolute;left:6.0px;top:0.45px;transform:scaleX(0.962);transform-origin:0 0;">0.0</span>
</div>
<div class="gl" style="left:73.2px;top:139.27px;width:1400px;height:1.6px;"></div>
<div class="gl" style="left:73.2px;top:169.74px;width:1400px;height:1.6px;"></div>
<div class="gl" style="left:73.2px;top:200.21px;width:1400px;height:1.6px;"></div>
<div class="gl" style="left:73.2px;top:230.68px;width:1400px;height:1.6px;"></div>
<div class="gl" style="left:73.2px;top:261.15px;width:1400px;height:1.6px;"></div>
<div class="gl" style="left:73.2px;top:291.62px;width:1400px;height:1.6px;"></div>
<div class="gl" style="left:73.2px;top:322.09px;width:1400px;height:1.6px;"></div>
<div class="gl" style="left:73.2px;top:352.56px;width:1400px;height:1.6px;"></div>
<div class="gl" style="left:73.2px;top:383.03px;width:1400px;height:1.6px;"></div>
<div class="gl" style="left:73.2px;top:413.50px;width:1400px;height:1.6px;"></div>
<div class="gl" style="left:73.2px;top:443.97px;width:1400px;height:1.6px;"></div>
<div class="gl" style="left:73.2px;top:474.44px;width:1400px;height:1.6px;"></div>
<div class="gl" style="left:73.2px;top:504.91px;width:1400px;height:1.6px;"></div>
<div class="gl" style="left:73.2px;top:535.38px;width:1400px;height:1.6px;"></div>
<div class="gl" style="left:73.2px;top:565.85px;width:1400px;height:1.6px;"></div>
<div class="gl" style="left:73.2px;top:596.32px;width:1400px;height:1.6px;"></div>
<div class="gl" style="left:73.2px;top:626.79px;width:1400px;height:1.6px;"></div>
<div class="gl" style="left:73.2px;top:657.26px;width:1400px;height:1.6px;"></div>
<div class="gl" style="left:73.2px;top:687.73px;width:1400px;height:1.6px;"></div>
<div class="gl" style="left:73.2px;top:718.20px;width:1400px;height:1.6px;"></div>
<div class="gl" style="left:73.2px;top:748.67px;width:1400px;height:1.6px;"></div>
<div class="gl" style="left:73.2px;top:779.14px;width:1400px;height:1.6px;"></div>
<div class="gl" style="left:73.2px;top:809.61px;width:1400px;height:1.6px;"></div>
<div class="gl" style="left:73.2px;top:840.08px;width:1400px;height:1.6px;"></div>
<div class="gl" style="left:73.2px;top:870.55px;width:1400px;height:1.6px;"></div>
<div class="gl" style="left:73.2px;top:901.02px;width:1400px;height:1.6px;"></div>
<div class="gl" style="left:73.2px;top:931.49px;width:1400px;height:1.6px;"></div>
<div class="gl" style="left:73.2px;top:108.8px;width:1.6px;height:900px;"></div>
<div class="gl" style="left:263.2px;top:108.8px;width:1.6px;height:900px;"></div>
<div class="gl" style="left:342.5px;top:108.8px;width:1.6px;height:900px;"></div>
<div class="gl" style="left:421.2px;top:108.8px;width:1.6px;height:900px;"></div>
<div class="gl" style="left:524.8px;top:108.8px;width:1.6px;height:900px;"></div>
<div class="gl" style="left:591.0px;top:108.8px;width:1.6px;height:900px;"></div>
<div class="gl" style="left:716.4px;top:108.8px;width:1.6px;height:900px;"></div>
<div class="gl" style="left:842.2px;top:108.8px;width:1.6px;height:900px;"></div>
<div class="gl" style="left:967.2px;top:108.8px;width:1.6px;height:900px;"></div>
<div class="gl" style="left:1092.2px;top:108.8px;width:1.6px;height:900px;"></div>
<div class="gl" style="left:1217.4px;top:108.8px;width:1.6px;height:900px;"></div>
<div class="gl" style="left:73.2px;top:108.80px;width:1400px;height:1.2px;"></div>
<div class="bl" style="left:71.5px;top:0;width:1.7px;height:1000px;"></div>
<div style="position:absolute;left:592.7px;top:841.68px;width:123.4px;height:27.87px;box-sizing:border-box;box-shadow:inset 0 0 0 2.3px #000;"></div>
</div>
</body></html>
